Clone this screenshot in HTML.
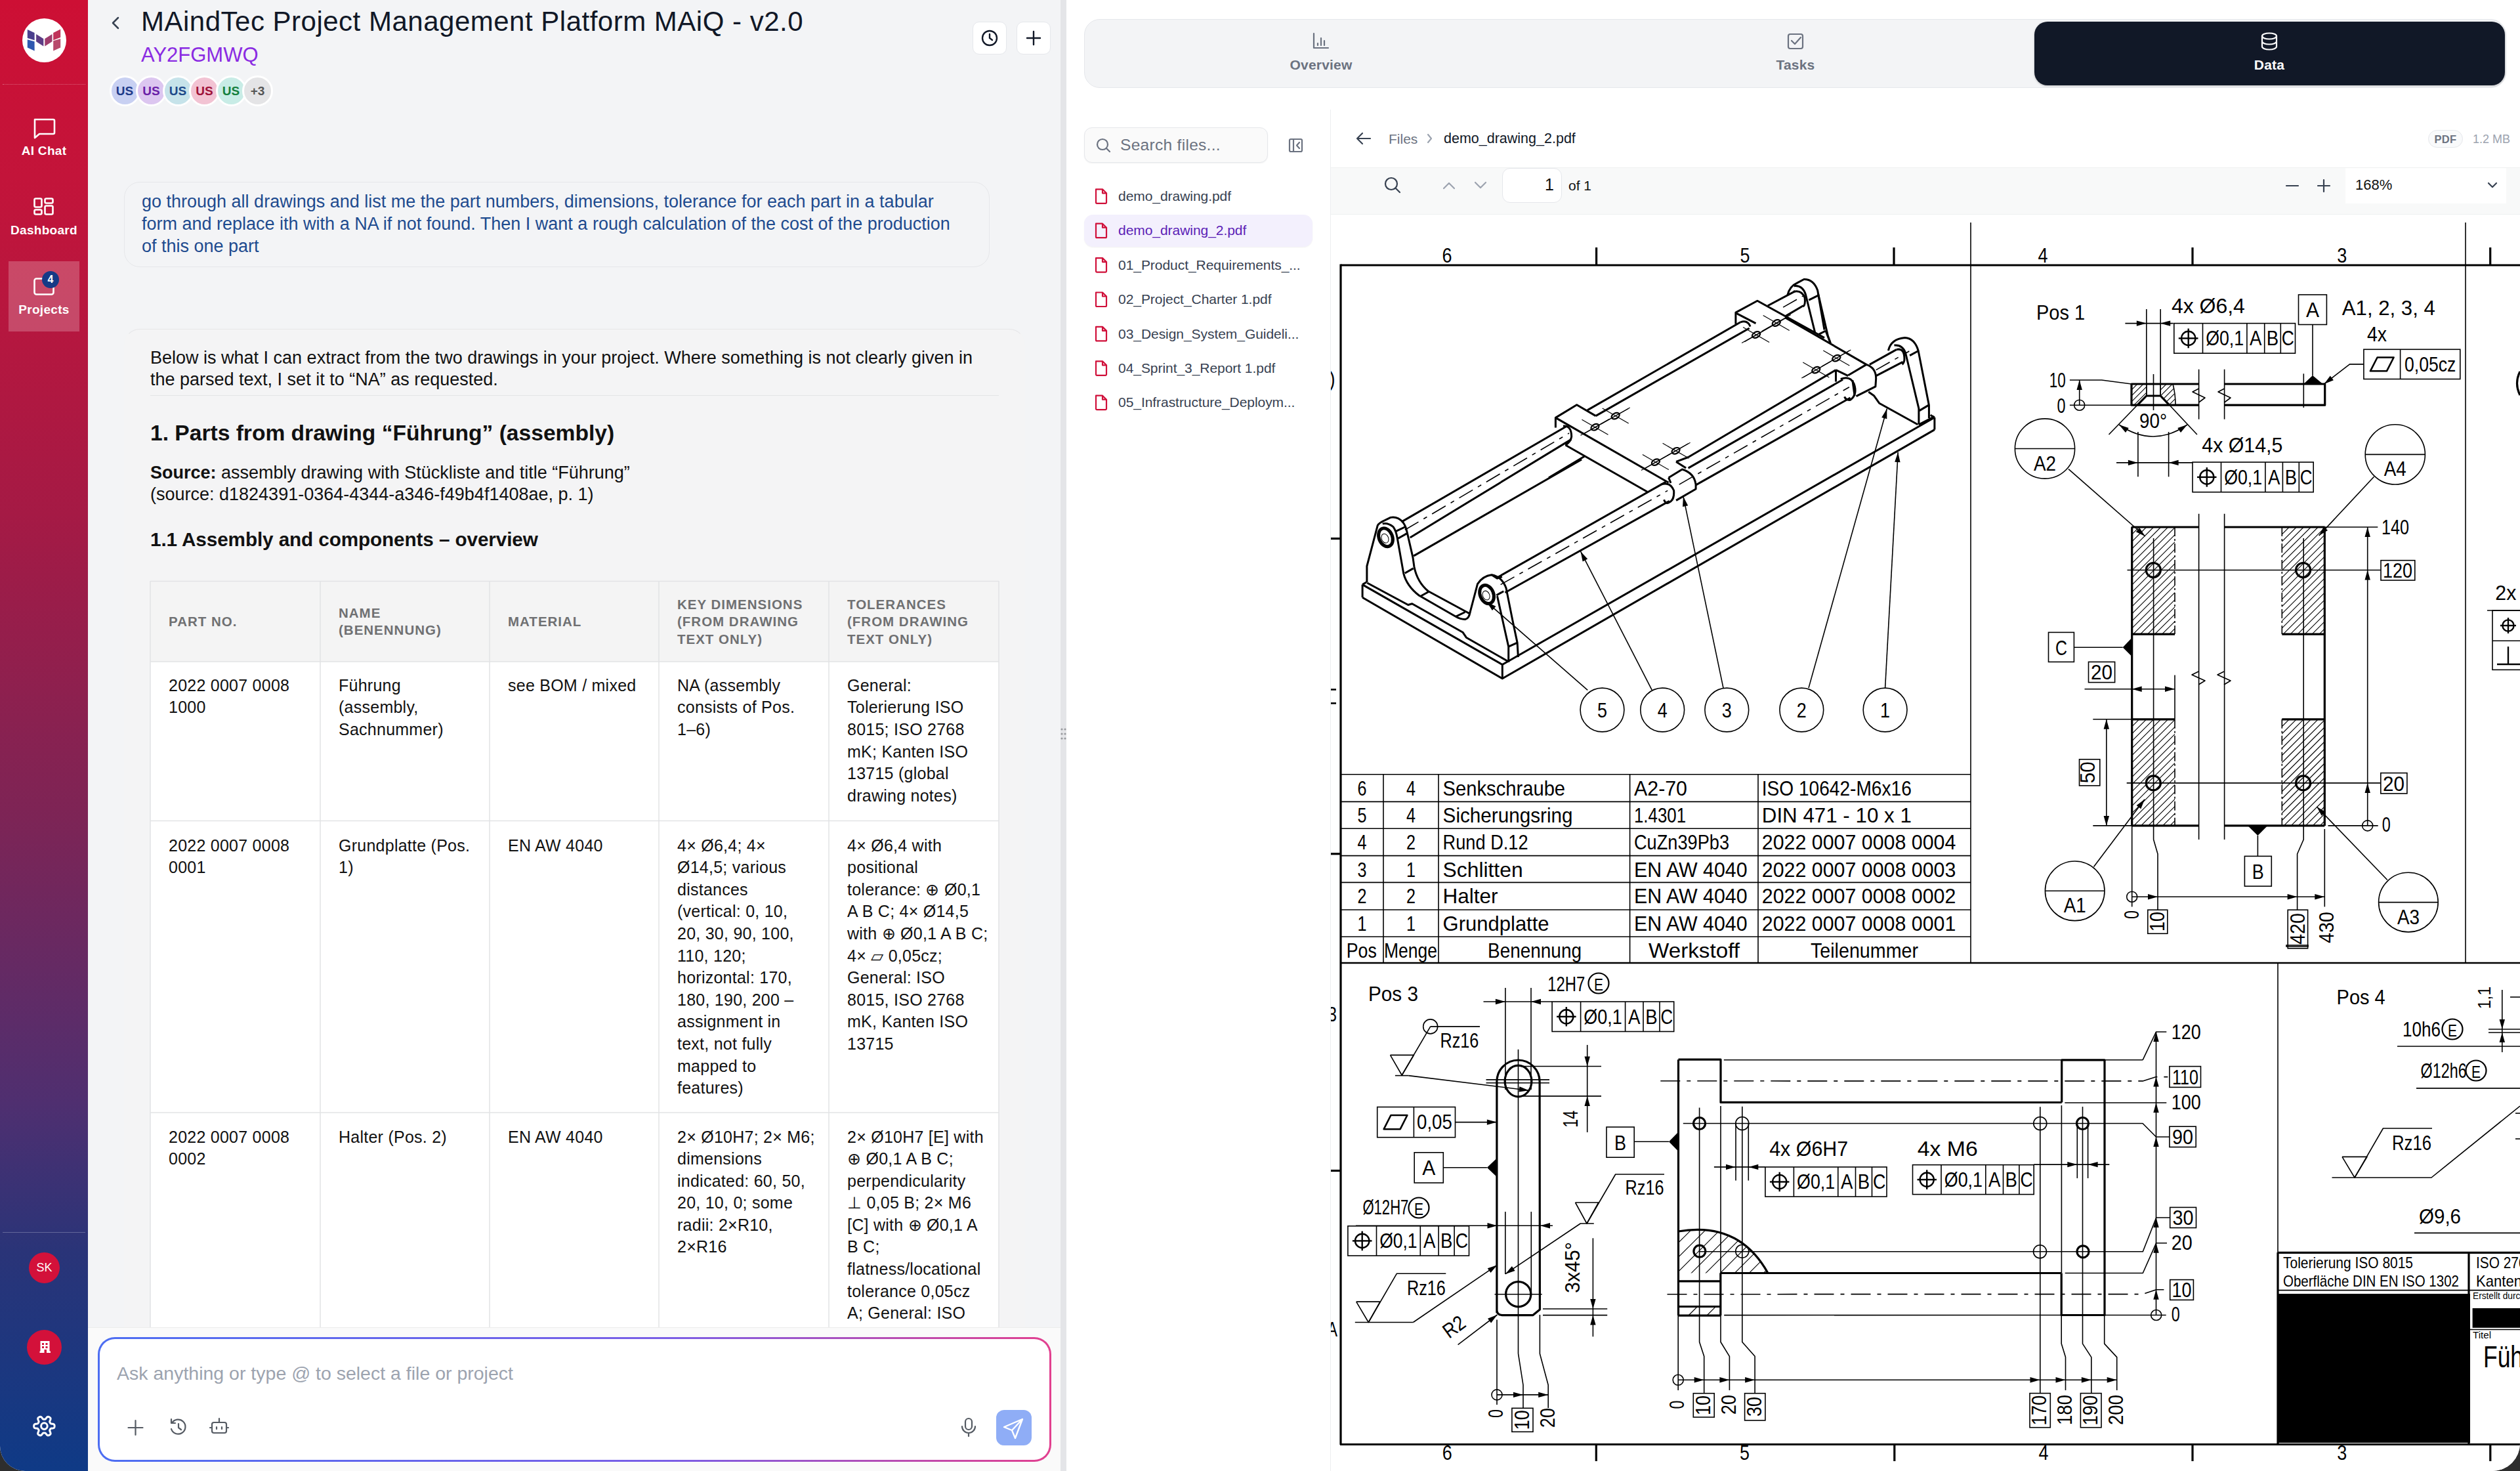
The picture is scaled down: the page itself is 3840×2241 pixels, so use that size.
<!DOCTYPE html><html><head><meta charset="utf-8"><style>
html,body{margin:0;padding:0;width:3840px;height:2241px;overflow:hidden;background:#2e2e2e;font-family:"Liberation Sans",sans-serif;}
#root{position:relative;width:3840px;height:2241px;overflow:hidden;border-radius:0 0 42px 38px;background:#fff;}
svg{position:absolute;left:0;top:0;overflow:visible}
</style></head><body><div id="root">
<div style="position:absolute;left:0px;top:0px;width:134px;height:2241px;background:linear-gradient(180deg,#cd0f34 0%,#c3143a 12%,#a51a45 35%,#7e2455 55%,#4f2f70 75%,#2a3478 85%,#0f3a86 100%);border-bottom-left-radius:22px;"></div>
<div style="position:absolute;left:34px;top:28px;width:67px;height:67px;background:#fff;border-radius:50%;"></div>
<svg width="3840" height="2241" style="pointer-events:none">
<g>
<polygon points="41.8,44.9 52.6,50 52.6,61.2 41.8,58.1" fill="#4b3f8e"/>
<polygon points="41.8,60.2 52.6,63.2 52.6,77.5 41.8,72.4" fill="#2f58b0"/>
<polygon points="55.1,52 66.3,59.1 66.3,70.4 55.1,63.2" fill="#5d3d85"/>
<polygon points="68.3,59.1 79.5,52 79.5,63.2 68.3,70.4" fill="#9e3c6c"/>
<polygon points="81.2,50 92.2,44.5 92.2,57.1 81.2,61.2" fill="#c0335a"/>
<polygon points="81.2,62.2 92.2,59.1 92.2,72.4 81.2,77.5" fill="#b84a6c"/>
</g>
</svg>
<div style="position:absolute;left:4px;top:128px;width:126px;height:1px;border-top:1px dotted rgba(255,255,255,0.35);"></div>
<svg width="3840" height="2241"><g fill="none" stroke="#fff" stroke-width="2.6" stroke-linejoin="round">
<path d="M53,182 h28 a2,2 0 0 1 2,2 v18 a2,2 0 0 1 -2,2 h-21 l-7,6 z"/>
<rect x="52.5" y="302.5" width="11" height="13" rx="2"/><rect x="68.5" y="302.5" width="12" height="7" rx="2"/>
<rect x="52.5" y="319.5" width="11" height="7" rx="2"/><rect x="68.5" y="313.5" width="12" height="13" rx="2"/>
<rect x="52.5" y="424.5" width="29" height="24" rx="3"/>
</g></svg>
<div style="position:absolute;left:7.0px;top:217.5px;font-size:19px;line-height:23.75px;color:#fff;font-weight:700;letter-spacing:0.3px;white-space:nowrap;text-align:center;width:120px;">AI Chat</div>
<div style="position:absolute;left:2.0px;top:338.5px;font-size:19px;line-height:23.75px;color:#fff;font-weight:700;letter-spacing:0.3px;white-space:nowrap;text-align:center;width:130px;">Dashboard</div>
<div style="position:absolute;left:13px;top:398px;width:108px;height:107px;background:rgba(255,255,255,0.22);"></div>
<div style="position:absolute;left:64px;top:413px;width:26px;height:26px;border-radius:50%;background:#163a86;color:#fff;font-size:16px;font-weight:700;text-align:center;line-height:26px">4</div>
<div style="position:absolute;left:2.0px;top:459.5px;font-size:19px;line-height:23.75px;color:#fff;font-weight:700;letter-spacing:0.3px;white-space:nowrap;text-align:center;width:130px;">Projects</div>
<div style="position:absolute;left:4px;top:1877px;width:126px;height:1px;background:rgba(255,255,255,0.25);"></div>
<div style="position:absolute;left:44px;top:1908px;width:47px;height:47px;border-radius:50%;background:#d3113a;color:#fff;font-size:18px;text-align:center;line-height:47px">SK</div>
<div style="position:absolute;left:41px;top:2026px;width:53px;height:53px;border-radius:50%;background:#d3113a;"></div>
<svg width="3840" height="2241"><g fill="#fff">
<path d="M61.5,2043 h14 v15.5 h1.5 v2.5 h-6 v-5 h-3.5 v5 h-7 v-2.5 h1 z"/></g>
<g fill="#d3113a"><rect x="64" y="2046" width="3" height="3"/><rect x="69.5" y="2046" width="3" height="3"/><rect x="64" y="2051" width="3" height="3"/><rect x="69.5" y="2051" width="3" height="3"/></g>
</svg>
<svg width="3840" height="2241"><g fill="none" stroke="#fff" stroke-width="3" stroke-linejoin="round">
<path d="M83.1,2172.6 L83.1,2173.1 L83.0,2173.7 L82.9,2174.2 L82.7,2174.7 L82.3,2175.2 L81.6,2175.6 L80.6,2175.9 L79.3,2176.0 L78.3,2176.1 L77.6,2176.3 L77.2,2176.6 L76.9,2176.8 L76.7,2177.1 L76.5,2177.4 L76.3,2177.8 L76.1,2178.1 L76.0,2178.4 L75.8,2178.7 L75.7,2179.1 L75.7,2179.6 L75.9,2180.3 L76.3,2181.2 L76.8,2182.4 L77.1,2183.4 L77.1,2184.2 L76.9,2184.8 L76.6,2185.2 L76.2,2185.6 L75.7,2185.9 L75.2,2186.2 L74.8,2186.5 L74.3,2186.7 L73.7,2186.8 L73.2,2186.9 L72.6,2186.8 L71.9,2186.4 L71.1,2185.7 L70.4,2184.7 L69.8,2183.8 L69.3,2183.3 L68.9,2183.1 L68.5,2183.0 L68.1,2182.9 L67.8,2182.9 L67.4,2182.9 L67.0,2182.9 L66.7,2182.9 L66.3,2183.0 L65.9,2183.1 L65.5,2183.3 L65.0,2183.8 L64.4,2184.7 L63.7,2185.7 L62.9,2186.4 L62.2,2186.8 L61.6,2186.9 L61.1,2186.8 L60.5,2186.7 L60.0,2186.5 L59.6,2186.2 L59.1,2185.9 L58.6,2185.6 L58.2,2185.2 L57.9,2184.8 L57.7,2184.2 L57.7,2183.4 L58.0,2182.4 L58.5,2181.2 L58.9,2180.3 L59.1,2179.6 L59.1,2179.1 L59.0,2178.7 L58.8,2178.4 L58.7,2178.1 L58.5,2177.8 L58.3,2177.4 L58.1,2177.1 L57.9,2176.8 L57.6,2176.6 L57.2,2176.3 L56.5,2176.1 L55.5,2176.0 L54.2,2175.9 L53.2,2175.6 L52.5,2175.2 L52.1,2174.7 L51.9,2174.2 L51.8,2173.7 L51.7,2173.1 L51.7,2172.6 L51.7,2172.1 L51.8,2171.5 L51.9,2171.0 L52.1,2170.5 L52.5,2170.0 L53.2,2169.6 L54.2,2169.3 L55.5,2169.2 L56.5,2169.1 L57.2,2168.9 L57.6,2168.6 L57.9,2168.4 L58.1,2168.1 L58.3,2167.8 L58.5,2167.4 L58.7,2167.1 L58.8,2166.8 L59.0,2166.5 L59.1,2166.1 L59.1,2165.6 L58.9,2164.9 L58.5,2164.0 L58.0,2162.8 L57.7,2161.8 L57.7,2161.0 L57.9,2160.4 L58.2,2160.0 L58.6,2159.6 L59.1,2159.3 L59.6,2159.0 L60.0,2158.7 L60.5,2158.5 L61.1,2158.4 L61.6,2158.3 L62.2,2158.4 L62.9,2158.8 L63.7,2159.5 L64.4,2160.5 L65.0,2161.4 L65.5,2161.9 L65.9,2162.1 L66.3,2162.2 L66.7,2162.3 L67.0,2162.3 L67.4,2162.3 L67.8,2162.3 L68.1,2162.3 L68.5,2162.2 L68.9,2162.1 L69.3,2161.9 L69.8,2161.4 L70.4,2160.5 L71.1,2159.5 L71.9,2158.8 L72.6,2158.4 L73.2,2158.3 L73.7,2158.4 L74.3,2158.5 L74.8,2158.7 L75.2,2159.0 L75.7,2159.3 L76.2,2159.6 L76.6,2160.0 L76.9,2160.4 L77.1,2161.0 L77.1,2161.8 L76.8,2162.8 L76.3,2164.0 L75.9,2164.9 L75.7,2165.6 L75.7,2166.1 L75.8,2166.5 L76.0,2166.8 L76.1,2167.1 L76.3,2167.4 L76.5,2167.8 L76.7,2168.1 L76.9,2168.4 L77.2,2168.6 L77.6,2168.9 L78.3,2169.1 L79.3,2169.2 L80.6,2169.3 L81.6,2169.6 L82.3,2170.0 L82.7,2170.5 L82.9,2171.0 L83.0,2171.5 L83.1,2172.1 Z"/>
<circle cx="67.4" cy="2172.6" r="4.8"/>
</g></svg>
<div style="position:absolute;left:134px;top:0px;width:1482px;height:2241px;background:#f3f4f6;"></div>
<svg width="3840" height="2241"><path d="M180,27 l-8,8 l8,8" fill="none" stroke="#374151" stroke-width="2.5" stroke-linecap="round" stroke-linejoin="round"/></svg>
<div style="position:absolute;left:215.0px;top:6.7px;font-size:42px;line-height:52.5px;color:#111827;font-weight:400;letter-spacing:0.5px;white-space:nowrap;">MAindTec Project Management Platform MAiQ - v2.0</div>
<div style="position:absolute;left:215.0px;top:64.9px;font-size:31px;line-height:38.75px;color:#8a2be2;font-weight:400;letter-spacing:0px;white-space:nowrap;">AY2FGMWQ</div>
<div style="position:absolute;left:166.5px;top:114.5px;width:41px;height:41px;border:3px solid #fff;border-radius:50%;background:#c8d0f2;color:#1e3a8a;font-size:19px;font-weight:700;text-align:center;line-height:41px">US</div>
<div style="position:absolute;left:207.0px;top:114.5px;width:41px;height:41px;border:3px solid #fff;border-radius:50%;background:#dcc6f0;color:#6b21a8;font-size:19px;font-weight:700;text-align:center;line-height:41px">US</div>
<div style="position:absolute;left:247.5px;top:114.5px;width:41px;height:41px;border:3px solid #fff;border-radius:50%;background:#c6e3ea;color:#1e4a8a;font-size:19px;font-weight:700;text-align:center;line-height:41px">US</div>
<div style="position:absolute;left:288.0px;top:114.5px;width:41px;height:41px;border:3px solid #fff;border-radius:50%;background:#f2c3d3;color:#9f1239;font-size:19px;font-weight:700;text-align:center;line-height:41px">US</div>
<div style="position:absolute;left:328.5px;top:114.5px;width:41px;height:41px;border:3px solid #fff;border-radius:50%;background:#c8ece6;color:#15803d;font-size:19px;font-weight:700;text-align:center;line-height:41px">US</div>
<div style="position:absolute;left:369.0px;top:114.5px;width:41px;height:41px;border:3px solid #fff;border-radius:50%;background:#e4e4e6;color:#555;font-size:19px;font-weight:700;text-align:center;line-height:41px">+3</div>
<div style="position:absolute;left:1482px;top:33px;width:52px;height:50px;background:#fff;border:1px solid #e5e7eb;border-radius:10px;box-sizing:border-box;"></div>
<div style="position:absolute;left:1549px;top:33px;width:52px;height:50px;background:#fff;border:1px solid #e5e7eb;border-radius:10px;box-sizing:border-box;"></div>
<svg width="3840" height="2241"><g fill="none" stroke="#111827" stroke-width="2.4" stroke-linecap="round">
<circle cx="1508" cy="58" r="11"/><path d="M1508,52 v6 l4,3"/>
<path d="M1575,48 v20 M1565,58 h20"/></g></svg>
<div style="position:absolute;left:189px;top:277px;width:1319px;height:130px;background:#f3f4f6;border:1px solid #e6e7ea;border-radius:24px;box-sizing:border-box;"></div>
<div style="position:absolute;left:216.0px;top:291.2px;font-size:27px;line-height:33.8px;color:#1e4b8f;font-weight:400;letter-spacing:0px;white-space:nowrap;">go through all drawings and list me the part numbers, dimensions, tolerance for each part in a tabular<br>form and replace ith with a NA if not found. Then I want a rough calculation of the cost of the production<br>of this one part</div>
<div style="position:absolute;left:189px;top:501px;width:1373px;height:1799px;background:#f4f4f5;border:1px solid transparent;border-top-color:#e6e6e8;border-radius:24px;box-sizing:border-box;"></div>
<div style="position:absolute;left:229.0px;top:528.6px;font-size:27px;line-height:33px;color:#111;font-weight:400;letter-spacing:0px;white-space:nowrap;">Below is what I can extract from the two drawings in your project. Where something is not clearly given in<br>the parsed text, I set it to “NA” as requested.</div>
<div style="position:absolute;left:229px;top:602px;width:1293px;height:1px;background:#e3e4e6;"></div>
<div style="position:absolute;left:229.0px;top:638.9px;font-size:33.6px;line-height:42.0px;color:#111;font-weight:700;letter-spacing:0px;white-space:nowrap;">1. Parts from drawing “Führung” (assembly)</div>
<div style="position:absolute;left:229.0px;top:704.1px;font-size:27px;line-height:33px;color:#111;font-weight:400;letter-spacing:0px;white-space:nowrap;"><b>Source:</b> assembly drawing with Stückliste and title “Führung”<br>(source: d1824391-0364-4344-a346-f49b4f1408ae, p. 1)</div>
<div style="position:absolute;left:229.0px;top:803.1px;font-size:29.7px;line-height:37.125px;color:#111;font-weight:700;letter-spacing:-0.1px;white-space:nowrap;">1.1 Assembly and components – overview</div>
<div style="position:absolute;left:229px;top:885px;width:1293px;height:123px;background:#f4f4f4;"></div>
<div style="position:absolute;left:229px;top:1008px;width:1293px;height:1092px;background:#fff;"></div>
<svg width="3840" height="2241"><g stroke="#e2e3e5" stroke-width="1.5" fill="none">
<path d="M229,885.5 H1522 M229,1008 H1522 M229,1250.5 H1522 M229,1695 H1522"/>
<path d="M229,885 V2100"/>
<path d="M488,885 V2100"/>
<path d="M746,885 V2100"/>
<path d="M1004,885 V2100"/>
<path d="M1263,885 V2100"/>
<path d="M1522,885 V2100"/>
</g></svg>
<div style="position:absolute;left:257.0px;top:934.1px;font-size:20.5px;line-height:26.5px;color:#6f7072;font-weight:700;letter-spacing:1.0px;white-space:nowrap;">PART NO.</div>
<div style="position:absolute;left:516.0px;top:920.9px;font-size:20.5px;line-height:26.5px;color:#6f7072;font-weight:700;letter-spacing:1.0px;white-space:nowrap;">NAME<br>(BENENNUNG)</div>
<div style="position:absolute;left:774.0px;top:934.1px;font-size:20.5px;line-height:26.5px;color:#6f7072;font-weight:700;letter-spacing:1.0px;white-space:nowrap;">MATERIAL</div>
<div style="position:absolute;left:1032.0px;top:907.6px;font-size:20.5px;line-height:26.5px;color:#6f7072;font-weight:700;letter-spacing:1.0px;white-space:nowrap;">KEY DIMENSIONS<br>(FROM DRAWING<br>TEXT ONLY)</div>
<div style="position:absolute;left:1291.0px;top:907.6px;font-size:20.5px;line-height:26.5px;color:#6f7072;font-weight:700;letter-spacing:1.0px;white-space:nowrap;">TOLERANCES<br>(FROM DRAWING<br>TEXT ONLY)</div>
<div style="position:absolute;left:257.0px;top:1027.9px;font-size:25px;line-height:33.6px;color:#111;font-weight:400;letter-spacing:0.25px;white-space:nowrap;">2022 0007 0008<br>1000</div>
<div style="position:absolute;left:516.0px;top:1027.9px;font-size:25px;line-height:33.6px;color:#111;font-weight:400;letter-spacing:0.25px;white-space:nowrap;">Führung<br>(assembly,<br>Sachnummer)</div>
<div style="position:absolute;left:774.0px;top:1027.9px;font-size:25px;line-height:33.6px;color:#111;font-weight:400;letter-spacing:0.25px;white-space:nowrap;">see BOM / mixed</div>
<div style="position:absolute;left:1032.0px;top:1027.9px;font-size:25px;line-height:33.6px;color:#111;font-weight:400;letter-spacing:0.25px;white-space:nowrap;">NA (assembly<br>consists of Pos.<br>1–6)</div>
<div style="position:absolute;left:1291.0px;top:1027.9px;font-size:25px;line-height:33.6px;color:#111;font-weight:400;letter-spacing:0.25px;white-space:nowrap;">General:<br>Tolerierung ISO<br>8015; ISO 2768<br>mK; Kanten ISO<br>13715 (global<br>drawing notes)</div>
<div style="position:absolute;left:257.0px;top:1271.7px;font-size:25px;line-height:33.6px;color:#111;font-weight:400;letter-spacing:0.25px;white-space:nowrap;">2022 0007 0008<br>0001</div>
<div style="position:absolute;left:516.0px;top:1271.7px;font-size:25px;line-height:33.6px;color:#111;font-weight:400;letter-spacing:0.25px;white-space:nowrap;">Grundplatte (Pos.<br>1)</div>
<div style="position:absolute;left:774.0px;top:1271.7px;font-size:25px;line-height:33.6px;color:#111;font-weight:400;letter-spacing:0.25px;white-space:nowrap;">EN AW 4040</div>
<div style="position:absolute;left:1032.0px;top:1271.7px;font-size:25px;line-height:33.6px;color:#111;font-weight:400;letter-spacing:0.25px;white-space:nowrap;">4× Ø6,4; 4×<br>Ø14,5; various<br>distances<br>(vertical: 0, 10,<br>20, 30, 90, 100,<br>110, 120;<br>horizontal: 170,<br>180, 190, 200 –<br>assignment in<br>text, not fully<br>mapped to<br>features)</div>
<div style="position:absolute;left:1291.0px;top:1271.7px;font-size:25px;line-height:33.6px;color:#111;font-weight:400;letter-spacing:0.25px;white-space:nowrap;">4× Ø6,4 with<br>positional<br>tolerance: ⊕ Ø0,1<br>A B C; 4× Ø14,5<br>with ⊕ Ø0,1 A B C;<br>4× ⏥ 0,05cz;<br>General: ISO<br>8015, ISO 2768<br>mK, Kanten ISO<br>13715</div>
<div style="position:absolute;left:257.0px;top:1715.5px;font-size:25px;line-height:33.6px;color:#111;font-weight:400;letter-spacing:0.25px;white-space:nowrap;">2022 0007 0008<br>0002</div>
<div style="position:absolute;left:516.0px;top:1715.5px;font-size:25px;line-height:33.6px;color:#111;font-weight:400;letter-spacing:0.25px;white-space:nowrap;">Halter (Pos. 2)</div>
<div style="position:absolute;left:774.0px;top:1715.5px;font-size:25px;line-height:33.6px;color:#111;font-weight:400;letter-spacing:0.25px;white-space:nowrap;">EN AW 4040</div>
<div style="position:absolute;left:1032.0px;top:1715.5px;font-size:25px;line-height:33.6px;color:#111;font-weight:400;letter-spacing:0.25px;white-space:nowrap;">2× Ø10H7; 2× M6;<br>dimensions<br>indicated: 60, 50,<br>20, 10, 0; some<br>radii: 2×R10,<br>2×R16</div>
<div style="position:absolute;left:1291.0px;top:1715.5px;font-size:25px;line-height:33.6px;color:#111;font-weight:400;letter-spacing:0.25px;white-space:nowrap;">2× Ø10H7 [E] with<br>⊕ Ø0,1 A B C;<br>perpendicularity<br>⊥ 0,05 B; 2× M6<br>[C] with ⊕ Ø0,1 A<br>B C;<br>flatness/locational<br>tolerance 0,05cz<br>A; General: ISO</div>
<div style="position:absolute;left:134px;top:2022px;width:1482px;height:219px;background:#fafafa;border-top:1px solid #ececec;box-sizing:border-box;"></div>
<div style="position:absolute;left:149px;top:2037px;width:1453px;height:190px;border-radius:26px;background:linear-gradient(90deg,#4d6ef2,#7a5ee6 60%,#e2408f);"></div>
<div style="position:absolute;left:152px;top:2040px;width:1447px;height:184px;border-radius:23px;background:#fff;"></div>
<div style="position:absolute;left:178.0px;top:2074.8px;font-size:28.5px;line-height:35.625px;color:#9ca3af;font-weight:400;letter-spacing:0px;white-space:nowrap;">Ask anything or type @ to select a file or project</div>
<svg width="3840" height="2241"><g fill="none" stroke="#555b63" stroke-width="2.2" stroke-linecap="round" stroke-linejoin="round">
<path d="M206.5,2164 v22 M195.5,2175 h22"/>
<path d="M262,2168 a11,11 0 1 1 -1,9"/><path d="M261,2162 v6 h6"/><path d="M272,2169 v6 l4,3"/>
<rect x="323" y="2167" width="22" height="16" rx="3"/><path d="M334,2161 v6 M320,2175 h3 M345,2175 h3 M330,2174 v3 M338,2174 v3"/>
<rect x="1471" y="2161" width="10" height="17" rx="5"/><path d="M1466,2173 a10,10 0 0 0 20,0 M1476,2183 v5"/>
</g></svg>
<div style="position:absolute;left:1518px;top:2148px;width:54px;height:54px;background:#8fadf6;border-radius:12px;"></div>
<svg width="3840" height="2241"><g fill="none" stroke="#fff" stroke-width="2.4" stroke-linejoin="round" stroke-linecap="round">
<path d="M1558,2162 l-28,12 l12,5 l5,12 z M1542,2179 l16,-17"/></g></svg>
<div style="position:absolute;left:1616px;top:0px;width:9px;height:2241px;background:#e4e5e8;"></div>
<svg width="3840" height="2241"><g fill="#9a9ca0"><circle cx="1618" cy="1111" r="1.6"/><circle cx="1623" cy="1111" r="1.6"/><circle cx="1618" cy="1118" r="1.6"/><circle cx="1623" cy="1118" r="1.6"/><circle cx="1618" cy="1125" r="1.6"/><circle cx="1623" cy="1125" r="1.6"/></g></svg>
<div style="position:absolute;left:1625px;top:0px;width:2215px;height:2241px;background:#fff;"></div>
<div style="position:absolute;left:1652px;top:29px;width:2167px;height:105px;background:#f3f4f6;border:1px solid #e5e7eb;border-radius:24px;box-sizing:border-box;"></div>
<div style="position:absolute;left:3100px;top:33px;width:717px;height:97px;background:#111827;border-radius:20px;box-shadow:0 1px 3px rgba(0,0,0,0.25);"></div>
<svg width="3840" height="2241"><g fill="none" stroke-width="2.2" stroke-linecap="round" stroke-linejoin="round">
<g stroke="#6b7280"><path d="M2002,51 v22 h22 M2008,66 v3 M2013,58 v11 M2018,62 v7"/>
<rect x="2725" y="52" width="22" height="22" rx="3"/><path d="M2730,62 l5,5 l9,-10"/></g>
<g stroke="#fff"><ellipse cx="3458" cy="55" rx="11" ry="4.5"/><path d="M3447,55 v16 a11,4.5 0 0 0 22,0 v-16 M3447,63 a11,4.5 0 0 0 22,0"/></g>
</g></svg>
<div style="position:absolute;left:1913.0px;top:85.6px;font-size:21px;line-height:26.25px;color:#6b7280;font-weight:700;letter-spacing:0.2px;white-space:nowrap;text-align:center;width:200px;">Overview</div>
<div style="position:absolute;left:2636.0px;top:85.6px;font-size:21px;line-height:26.25px;color:#6b7280;font-weight:700;letter-spacing:0.2px;white-space:nowrap;text-align:center;width:200px;">Tasks</div>
<div style="position:absolute;left:3358.0px;top:86.1px;font-size:21px;line-height:26.25px;color:#fff;font-weight:700;letter-spacing:0.2px;white-space:nowrap;text-align:center;width:200px;">Data</div>
<div style="position:absolute;left:1652px;top:194px;width:280px;height:54px;background:#fafafa;border:1px solid #e5e7eb;border-radius:12px;box-sizing:border-box;box-shadow:0 1px 2px rgba(0,0,0,0.05)"></div>
<svg width="3840" height="2241"><g fill="none" stroke="#6b7280" stroke-width="2.2" stroke-linecap="round" stroke-linejoin="round">
<circle cx="1680" cy="220" r="8"/><path d="M1686,226 l5,5"/>
<rect x="1965" y="212" width="19" height="19" rx="2"/><path d="M1971,212 v19 M1980,217 l-4,4.5 l4,4.5"/>
</g></svg>
<div style="position:absolute;left:1707.0px;top:205.7px;font-size:24.5px;line-height:30.625px;color:#6b7280;font-weight:400;letter-spacing:0.3px;white-space:nowrap;">Search files...</div>
<div style="position:absolute;left:2027px;top:167px;width:1px;height:2074px;background:#eceef0;"></div>
<div style="position:absolute;left:1652px;top:327px;width:348px;height:49px;background:#f3f0fd;border-radius:14px;box-shadow:0 1px 2px rgba(0,0,0,0.06)"></div>
<svg width="3840" height="2241"><g fill="none" stroke="#d0103a" stroke-width="2.2" stroke-linejoin="round">
<path d="M1670,288.3 h10 l6,6 v14 a1.5,1.5 0 0 1 -1.5,1.5 h-13 a1.5,1.5 0 0 1 -1.5,-1.5 z M1680,288.3 v6 h6"/>
<path d="M1670,340.7 h10 l6,6 v14 a1.5,1.5 0 0 1 -1.5,1.5 h-13 a1.5,1.5 0 0 1 -1.5,-1.5 z M1680,340.7 v6 h6"/>
<path d="M1670,393.1 h10 l6,6 v14 a1.5,1.5 0 0 1 -1.5,1.5 h-13 a1.5,1.5 0 0 1 -1.5,-1.5 z M1680,393.1 v6 h6"/>
<path d="M1670,445.5 h10 l6,6 v14 a1.5,1.5 0 0 1 -1.5,1.5 h-13 a1.5,1.5 0 0 1 -1.5,-1.5 z M1680,445.5 v6 h6"/>
<path d="M1670,497.9 h10 l6,6 v14 a1.5,1.5 0 0 1 -1.5,1.5 h-13 a1.5,1.5 0 0 1 -1.5,-1.5 z M1680,497.9 v6 h6"/>
<path d="M1670,550.3 h10 l6,6 v14 a1.5,1.5 0 0 1 -1.5,1.5 h-13 a1.5,1.5 0 0 1 -1.5,-1.5 z M1680,550.3 v6 h6"/>
<path d="M1670,602.7 h10 l6,6 v14 a1.5,1.5 0 0 1 -1.5,1.5 h-13 a1.5,1.5 0 0 1 -1.5,-1.5 z M1680,602.7 v6 h6"/>
</g></svg>
<div style="position:absolute;left:1704.0px;top:285.9px;font-size:21px;line-height:26.25px;color:#374151;font-weight:400;letter-spacing:-0.05px;white-space:nowrap;">demo_drawing.pdf</div>
<div style="position:absolute;left:1704.0px;top:338.3px;font-size:21px;line-height:26.25px;color:#5b21b6;font-weight:400;letter-spacing:-0.05px;white-space:nowrap;">demo_drawing_2.pdf</div>
<div style="position:absolute;left:1704.0px;top:390.7px;font-size:21px;line-height:26.25px;color:#374151;font-weight:400;letter-spacing:-0.05px;white-space:nowrap;">01_Product_Requirements_...</div>
<div style="position:absolute;left:1704.0px;top:443.1px;font-size:21px;line-height:26.25px;color:#374151;font-weight:400;letter-spacing:-0.05px;white-space:nowrap;">02_Project_Charter 1.pdf</div>
<div style="position:absolute;left:1704.0px;top:495.5px;font-size:21px;line-height:26.25px;color:#374151;font-weight:400;letter-spacing:-0.05px;white-space:nowrap;">03_Design_System_Guideli...</div>
<div style="position:absolute;left:1704.0px;top:547.9px;font-size:21px;line-height:26.25px;color:#374151;font-weight:400;letter-spacing:-0.05px;white-space:nowrap;">04_Sprint_3_Report 1.pdf</div>
<div style="position:absolute;left:1704.0px;top:600.3px;font-size:21px;line-height:26.25px;color:#374151;font-weight:400;letter-spacing:-0.05px;white-space:nowrap;">05_Infrastructure_Deploym...</div>
<svg width="3840" height="2241"><g fill="none" stroke="#374151" stroke-width="2.2" stroke-linecap="round" stroke-linejoin="round">
<path d="M2088,211 h-20 M2076,203 l-8,8 l8,8"/>
<path d="M2176,205 l5,6 l-5,6" stroke="#9ca3af"/>
</g></svg>
<div style="position:absolute;left:2116.0px;top:198.6px;font-size:21px;line-height:26.25px;color:#6b7280;font-weight:400;letter-spacing:0px;white-space:nowrap;">Files</div>
<div style="position:absolute;left:2200.0px;top:198.1px;font-size:21.5px;line-height:26.875px;color:#111827;font-weight:400;letter-spacing:0px;white-space:nowrap;">demo_drawing_2.pdf</div>
<div style="position:absolute;left:3700px;top:198px;width:53px;height:27px;background:#f9fafb;border:1px solid #e5e7eb;border-radius:14px;box-sizing:border-box;"></div>
<div style="position:absolute;left:3696.5px;top:202.0px;font-size:16.5px;line-height:20.625px;color:#6b7280;font-weight:700;letter-spacing:0.3px;white-space:nowrap;text-align:center;width:60px;">PDF</div>
<div style="position:absolute;left:3768.0px;top:200.5px;font-size:18px;line-height:22.5px;color:#9ca3af;font-weight:400;letter-spacing:0px;white-space:nowrap;">1.2 MB</div>
<div style="position:absolute;left:2028px;top:255px;width:1812px;height:72px;background:#f8f9f9;border-top:1px solid #eef0f0;border-bottom:1px solid #eef0f0;box-sizing:border-box;"></div>
<div style="position:absolute;left:2289px;top:256px;width:91px;height:53px;background:#fff;border:1px solid #e5e7eb;border-radius:12px;box-sizing:border-box;"></div>
<div style="position:absolute;left:2328.0px;top:266.2px;font-size:25px;line-height:31.25px;color:#111;font-weight:400;letter-spacing:0px;white-space:nowrap;text-align:right;width:40px;">1</div>
<div style="position:absolute;left:2390.0px;top:269.6px;font-size:21px;line-height:26.25px;color:#111;font-weight:400;letter-spacing:0px;white-space:nowrap;">of 1</div>
<div style="position:absolute;left:3574px;top:256px;width:245px;height:54px;background:#fff;"></div>
<div style="position:absolute;left:3589.0px;top:267.6px;font-size:22px;line-height:27.5px;color:#111;font-weight:400;letter-spacing:0px;white-space:nowrap;">168%</div>
<svg width="3840" height="2241"><g fill="none" stroke="#374151" stroke-width="2.2" stroke-linecap="round" stroke-linejoin="round">
<circle cx="2120" cy="280" r="9"/><path d="M2127,287 l6,6"/>
<path d="M2200,287 l8,-8 l8,8 M2248,278 l8,8 l8,-8" stroke="#9ca3af"/>
<path d="M3484,283 h18 M3532,283 h18 M3541,274 v18"/>
<path d="M3792,279 l6,6 l6,-6"/>
</g></svg>
<svg width="3840" height="2241" style="position:absolute;left:0;top:0"><defs><clipPath id="pdfclip"><rect x="2028" y="327" width="1812" height="1914"/></clipPath></defs><g clip-path="url(#pdfclip)" font-family="Liberation Sans" fill="#000"><path d="M2043.0,404.0 L3840.0,404.0" stroke="#000" stroke-width="3.2" fill="none" stroke-linejoin="round" />
<path d="M2043.0,402.5 L2043.0,2201.0" stroke="#000" stroke-width="3.2" fill="none" stroke-linejoin="round" />
<path d="M2042.0,2200.5 L3840.0,2200.5" stroke="#000" stroke-width="3.2" fill="none" stroke-linejoin="round" />
<path d="M2432.6,377.0 L2432.6,404.0" stroke="#000" stroke-width="3.2" fill="none" stroke-linejoin="round" />
<path d="M2886.0,377.0 L2886.0,404.0" stroke="#000" stroke-width="3.2" fill="none" stroke-linejoin="round" />
<path d="M3341.0,377.0 L3341.0,404.0" stroke="#000" stroke-width="3.2" fill="none" stroke-linejoin="round" />
<path d="M3794.7,377.0 L3794.7,404.0" stroke="#000" stroke-width="3.2" fill="none" stroke-linejoin="round" />
<text x="2205.0" y="400.0" font-size="32" text-anchor="middle" textLength="15.0" lengthAdjust="spacingAndGlyphs">6</text>
<text x="2659.0" y="400.0" font-size="32" text-anchor="middle" textLength="15.0" lengthAdjust="spacingAndGlyphs">5</text>
<text x="3113.0" y="400.0" font-size="32" text-anchor="middle" textLength="15.0" lengthAdjust="spacingAndGlyphs">4</text>
<text x="3568.8" y="400.0" font-size="32" text-anchor="middle" textLength="15.0" lengthAdjust="spacingAndGlyphs">3</text>
<path d="M2432.3,2200.0 L2432.3,2226.0" stroke="#000" stroke-width="3.2" fill="none" stroke-linejoin="round" />
<path d="M2886.8,2200.0 L2886.8,2226.0" stroke="#000" stroke-width="3.2" fill="none" stroke-linejoin="round" />
<path d="M3341.0,2200.0 L3341.0,2226.0" stroke="#000" stroke-width="3.2" fill="none" stroke-linejoin="round" />
<path d="M3794.8,2200.0 L3794.8,2226.0" stroke="#000" stroke-width="3.2" fill="none" stroke-linejoin="round" />
<text x="2205.2" y="2224.4" font-size="32" text-anchor="middle" textLength="15.0" lengthAdjust="spacingAndGlyphs">6</text>
<text x="2658.6" y="2224.4" font-size="32" text-anchor="middle" textLength="15.0" lengthAdjust="spacingAndGlyphs">5</text>
<text x="3114.0" y="2224.4" font-size="32" text-anchor="middle" textLength="15.0" lengthAdjust="spacingAndGlyphs">4</text>
<text x="3568.8" y="2224.4" font-size="32" text-anchor="middle" textLength="15.0" lengthAdjust="spacingAndGlyphs">3</text>
<path d="M2028.0,820.5 L2043.0,820.5" stroke="#000" stroke-width="3.2" fill="none" stroke-linejoin="round" />
<path d="M2028.0,1300.8 L2043.0,1300.8" stroke="#000" stroke-width="3.2" fill="none" stroke-linejoin="round" />
<path d="M2028.0,1783.5 L2043.0,1783.5" stroke="#000" stroke-width="3.2" fill="none" stroke-linejoin="round" />
<text x="2030.0" y="588.0" font-size="31.5" text-anchor="middle" textLength="9.0" lengthAdjust="spacingAndGlyphs">)</text>
<text x="2030.0" y="1556.0" font-size="31.5" text-anchor="middle" textLength="14.0" lengthAdjust="spacingAndGlyphs">3</text>
<text x="2030.0" y="2036.0" font-size="31.5" text-anchor="middle" textLength="16.0" lengthAdjust="spacingAndGlyphs">A</text>
<path d="M3003.0,339.0 L3003.0,1466.0" stroke="#000" stroke-width="1.6" fill="none" stroke-linejoin="round" />
<path d="M3757.0,339.0 L3757.0,1466.0" stroke="#000" stroke-width="1.6" fill="none" stroke-linejoin="round" />
<path d="M2043.0,1466.5 L3840.0,1466.5" stroke="#000" stroke-width="1.6" fill="none" stroke-linejoin="round" />
<path d="M3471.0,1466.0 L3471.0,2200.0" stroke="#000" stroke-width="1.6" fill="none" stroke-linejoin="round" />
<path d="M2043.0,1179.8 L3003.0,1179.8" stroke="#000" stroke-width="1.6" fill="none" stroke-linejoin="round" />
<path d="M2043.0,1221.4 L3003.0,1221.4" stroke="#000" stroke-width="1.6" fill="none" stroke-linejoin="round" />
<path d="M2043.0,1262.3 L3003.0,1262.3" stroke="#000" stroke-width="1.6" fill="none" stroke-linejoin="round" />
<path d="M2043.0,1303.6 L3003.0,1303.6" stroke="#000" stroke-width="1.6" fill="none" stroke-linejoin="round" />
<path d="M2043.0,1344.4 L3003.0,1344.4" stroke="#000" stroke-width="1.6" fill="none" stroke-linejoin="round" />
<path d="M2043.0,1386.0 L3003.0,1386.0" stroke="#000" stroke-width="1.6" fill="none" stroke-linejoin="round" />
<path d="M2043.0,1427.0 L3003.0,1427.0" stroke="#000" stroke-width="1.6" fill="none" stroke-linejoin="round" />
<path d="M2043.0,1467.5 L3003.0,1467.5" stroke="#000" stroke-width="1.6" fill="none" stroke-linejoin="round" />
<path d="M2108.0,1179.8 L2108.0,1467.5" stroke="#000" stroke-width="1.6" fill="none" stroke-linejoin="round" />
<path d="M2192.0,1179.8 L2192.0,1467.5" stroke="#000" stroke-width="1.6" fill="none" stroke-linejoin="round" />
<path d="M2483.6,1179.8 L2483.6,1467.5" stroke="#000" stroke-width="1.6" fill="none" stroke-linejoin="round" />
<path d="M2679.0,1179.8 L2679.0,1467.5" stroke="#000" stroke-width="1.6" fill="none" stroke-linejoin="round" />
<text x="2075.6" y="1211.8" font-size="31.5" text-anchor="middle" textLength="14.0" lengthAdjust="spacingAndGlyphs">6</text>
<text x="2150.0" y="1211.8" font-size="31.5" text-anchor="middle" textLength="14.0" lengthAdjust="spacingAndGlyphs">4</text>
<text x="2198.6" y="1211.8" font-size="31.5" text-anchor="start" textLength="186.5" lengthAdjust="spacingAndGlyphs">Senkschraube</text>
<text x="2490.0" y="1211.8" font-size="31.5" text-anchor="start" textLength="81.0" lengthAdjust="spacingAndGlyphs">A2-70</text>
<text x="2684.8" y="1211.8" font-size="31.5" text-anchor="start" textLength="228.0" lengthAdjust="spacingAndGlyphs">ISO 10642-M6x16</text>
<text x="2075.6" y="1253.4" font-size="31.5" text-anchor="middle" textLength="14.0" lengthAdjust="spacingAndGlyphs">5</text>
<text x="2150.0" y="1253.4" font-size="31.5" text-anchor="middle" textLength="14.0" lengthAdjust="spacingAndGlyphs">4</text>
<text x="2198.6" y="1253.4" font-size="31.5" text-anchor="start" textLength="198.0" lengthAdjust="spacingAndGlyphs">Sicherungsring</text>
<text x="2490.0" y="1253.4" font-size="31.5" text-anchor="start" textLength="79.0" lengthAdjust="spacingAndGlyphs">1.4301</text>
<text x="2684.8" y="1253.4" font-size="31.5" text-anchor="start" textLength="228.0" lengthAdjust="spacingAndGlyphs">DIN 471 - 10 x 1</text>
<text x="2075.6" y="1294.3" font-size="31.5" text-anchor="middle" textLength="14.0" lengthAdjust="spacingAndGlyphs">4</text>
<text x="2150.0" y="1294.3" font-size="31.5" text-anchor="middle" textLength="14.0" lengthAdjust="spacingAndGlyphs">2</text>
<text x="2198.6" y="1294.3" font-size="31.5" text-anchor="start" textLength="130.0" lengthAdjust="spacingAndGlyphs">Rund D.12</text>
<text x="2490.0" y="1294.3" font-size="31.5" text-anchor="start" textLength="145.0" lengthAdjust="spacingAndGlyphs">CuZn39Pb3</text>
<text x="2684.8" y="1294.3" font-size="31.5" text-anchor="start" textLength="295.6" lengthAdjust="spacingAndGlyphs">2022 0007 0008 0004</text>
<text x="2075.6" y="1335.6" font-size="31.5" text-anchor="middle" textLength="14.0" lengthAdjust="spacingAndGlyphs">3</text>
<text x="2150.0" y="1335.6" font-size="31.5" text-anchor="middle" textLength="14.0" lengthAdjust="spacingAndGlyphs">1</text>
<text x="2198.6" y="1335.6" font-size="31.5" text-anchor="start" textLength="122.0" lengthAdjust="spacingAndGlyphs">Schlitten</text>
<text x="2490.0" y="1335.6" font-size="31.5" text-anchor="start" textLength="172.6" lengthAdjust="spacingAndGlyphs">EN AW 4040</text>
<text x="2684.8" y="1335.6" font-size="31.5" text-anchor="start" textLength="295.6" lengthAdjust="spacingAndGlyphs">2022 0007 0008 0003</text>
<text x="2075.6" y="1376.4" font-size="31.5" text-anchor="middle" textLength="14.0" lengthAdjust="spacingAndGlyphs">2</text>
<text x="2150.0" y="1376.4" font-size="31.5" text-anchor="middle" textLength="14.0" lengthAdjust="spacingAndGlyphs">2</text>
<text x="2198.6" y="1376.4" font-size="31.5" text-anchor="start" textLength="84.0" lengthAdjust="spacingAndGlyphs">Halter</text>
<text x="2490.0" y="1376.4" font-size="31.5" text-anchor="start" textLength="172.6" lengthAdjust="spacingAndGlyphs">EN AW 4040</text>
<text x="2684.8" y="1376.4" font-size="31.5" text-anchor="start" textLength="295.6" lengthAdjust="spacingAndGlyphs">2022 0007 0008 0002</text>
<text x="2075.6" y="1418.0" font-size="31.5" text-anchor="middle" textLength="14.0" lengthAdjust="spacingAndGlyphs">1</text>
<text x="2150.0" y="1418.0" font-size="31.5" text-anchor="middle" textLength="14.0" lengthAdjust="spacingAndGlyphs">1</text>
<text x="2198.6" y="1418.0" font-size="31.5" text-anchor="start" textLength="162.0" lengthAdjust="spacingAndGlyphs">Grundplatte</text>
<text x="2490.0" y="1418.0" font-size="31.5" text-anchor="start" textLength="172.6" lengthAdjust="spacingAndGlyphs">EN AW 4040</text>
<text x="2684.8" y="1418.0" font-size="31.5" text-anchor="start" textLength="295.6" lengthAdjust="spacingAndGlyphs">2022 0007 0008 0001</text>
<text x="2051.8" y="1458.7" font-size="31.5" text-anchor="start" textLength="46.0" lengthAdjust="spacingAndGlyphs">Pos</text>
<text x="2109.0" y="1458.7" font-size="31.5" text-anchor="start" textLength="81.0" lengthAdjust="spacingAndGlyphs">Menge</text>
<text x="2267.0" y="1458.7" font-size="31.5" text-anchor="start" textLength="143.0" lengthAdjust="spacingAndGlyphs">Benennung</text>
<text x="2512.0" y="1458.7" font-size="31.5" text-anchor="start" textLength="139.0" lengthAdjust="spacingAndGlyphs">Werkstoff</text>
<text x="2759.0" y="1458.7" font-size="31.5" text-anchor="start" textLength="164.0" lengthAdjust="spacingAndGlyphs">Teilenummer</text>
<path d="M3003.0,1467.5 L3840.0,1467.5" stroke="#000" stroke-width="1.6" fill="none" stroke-linejoin="round" />
<path d="M2028.0,1050.5 L2036.0,1050.5" stroke="#000" stroke-width="2.6" fill="none" stroke-linejoin="round" />
<path d="M2028.0,1071.4 L2036.0,1071.4" stroke="#000" stroke-width="2.6" fill="none" stroke-linejoin="round" />
<text x="3103.0" y="486.7" font-size="31.5" text-anchor="start" textLength="74.0" lengthAdjust="spacingAndGlyphs">Pos 1</text>
<text x="3308.9" y="477.0" font-size="31.5" text-anchor="start" textLength="112.0" lengthAdjust="spacingAndGlyphs">4x Ø6,4</text>
<text x="3568.8" y="480.0" font-size="31.5" text-anchor="start" textLength="142.0" lengthAdjust="spacingAndGlyphs">A1, 2, 3, 4</text>
<text x="3607.0" y="519.8" font-size="31.5" text-anchor="start" textLength="30.0" lengthAdjust="spacingAndGlyphs">4x</text>
<path d="M3350.6,585.0 L3248.0,585.0 L3248.0,617.2 L3350.6,617.2" stroke="#000" stroke-width="3.2" fill="none" stroke-linejoin="round" />
<path d="M3389.6,585.0 L3542.7,585.0 L3542.7,617.2 L3389.6,617.2" stroke="#000" stroke-width="3.2" fill="none" stroke-linejoin="round" />
<path d="M3350.6,562.7 L3350.6,638.7" stroke="#000" stroke-width="1.6" fill="none" stroke-linejoin="round" />
<path d="M3389.6,562.7 L3389.6,638.7" stroke="#000" stroke-width="1.6" fill="none" stroke-linejoin="round" />
<path d="M3350.6,592.0 L3341.0,597.0 L3360.0,606.0 L3350.6,613.0" stroke="#000" stroke-width="1.6" fill="none" stroke-linejoin="round" />
<path d="M3389.6,592.0 L3380.0,597.0 L3399.0,606.0 L3389.6,613.0" stroke="#000" stroke-width="1.6" fill="none" stroke-linejoin="round" />
<clipPath id="hp1"><path d="M3248.0,585.0 L3270.8,585.0 L3270.8,603.0 L3257.0,617.2 L3248.0,617.2 Z"/></clipPath>
<path d="M3215.8,617.2 L3248.0,585.0 M3224.8,617.2 L3257.0,585.0 M3233.8,617.2 L3266.0,585.0 M3242.8,617.2 L3275.0,585.0 M3251.8,617.2 L3284.0,585.0 M3260.8,617.2 L3293.0,585.0 M3269.8,617.2 L3302.0,585.0" stroke="#000" stroke-width="1.1" clip-path="url(#hp1)"/>
<clipPath id="hp2"><path d="M3292.2,585.0 L3311.0,585.0 L3315.0,617.2 L3305.8,617.2 L3292.2,603.0 Z"/></clipPath>
<path d="M3260.0,617.2 L3292.2,585.0 M3269.0,617.2 L3301.2,585.0 M3278.0,617.2 L3310.2,585.0 M3287.0,617.2 L3319.2,585.0 M3296.0,617.2 L3328.2,585.0 M3305.0,617.2 L3337.2,585.0 M3314.0,617.2 L3346.2,585.0" stroke="#000" stroke-width="1.1" clip-path="url(#hp2)"/>
<path d="M3257.0,617.2 L3270.8,603.0 L3292.2,603.0 L3305.8,617.2" stroke="#000" stroke-width="3.2" fill="none" stroke-linejoin="round" />
<path d="M3270.8,585.0 L3270.8,603.0" stroke="#000" stroke-width="1.6" fill="none" stroke-linejoin="round" />
<path d="M3292.2,585.0 L3292.2,603.0" stroke="#000" stroke-width="1.6" fill="none" stroke-linejoin="round" />
<path d="M3311,585 Q3315,600 3315,617" stroke="#000" stroke-width="1.6" fill="none" stroke-linejoin="round"/>
<path d="M3281.5,570.0 L3281.5,625.0" stroke="#000" stroke-width="1.6" fill="none" stroke-linejoin="round" />
<path d="M3270.8,471.0 L3270.8,603.0" stroke="#000" stroke-width="1.6" fill="none" stroke-linejoin="round" />
<path d="M3292.2,471.0 L3292.2,603.0" stroke="#000" stroke-width="1.6" fill="none" stroke-linejoin="round" />
<path d="M3238.4,492.6 L3311.7,492.6" stroke="#000" stroke-width="1.6" fill="none" stroke-linejoin="round" />
<path d="M3270.8,492.6 L3255.8,496.8 L3255.8,488.4 Z" fill="#000"/>
<path d="M3292.2,492.6 L3307.2,488.4 L3307.2,496.8 Z" fill="#000"/>
<rect x="3312.8" y="492.6" width="184.7" height="45.6" stroke="#000" stroke-width="1.6" fill="none"/>
<path d="M3356.5,492.6 L3356.5,538.2" stroke="#000" stroke-width="1.6" fill="none" stroke-linejoin="round" />
<path d="M3423.9,492.6 L3423.9,538.2" stroke="#000" stroke-width="1.6" fill="none" stroke-linejoin="round" />
<path d="M3450.7,492.6 L3450.7,538.2" stroke="#000" stroke-width="1.6" fill="none" stroke-linejoin="round" />
<path d="M3475.3,492.6 L3475.3,538.2" stroke="#000" stroke-width="1.6" fill="none" stroke-linejoin="round" />
<circle cx="3334.7" cy="515.4" r="10.7" stroke="#000" stroke-width="2.4" fill="none"/>
<path d="M3319.8,515.4 L3349.5,515.4" stroke="#000" stroke-width="2.4" fill="none" stroke-linejoin="round" />
<path d="M3334.7,500.5 L3334.7,530.3" stroke="#000" stroke-width="2.4" fill="none" stroke-linejoin="round" />
<text x="3390.2" y="526.2" font-size="31.5" text-anchor="middle" textLength="58.0" lengthAdjust="spacingAndGlyphs">Ø0,1</text>
<text x="3437.3" y="526.2" font-size="31.5" text-anchor="middle" textLength="18.4" lengthAdjust="spacingAndGlyphs">A</text>
<text x="3463.0" y="526.2" font-size="31.5" text-anchor="middle" textLength="18.4" lengthAdjust="spacingAndGlyphs">B</text>
<text x="3486.4" y="526.2" font-size="31.5" text-anchor="middle" textLength="19.1" lengthAdjust="spacingAndGlyphs">C</text>
<rect x="3502.5" y="449.0" width="42.9" height="45.5" stroke="#000" stroke-width="1.6" fill="none"/>
<text x="3524.0" y="483.0" font-size="31.5" text-anchor="middle" textLength="20.0" lengthAdjust="spacingAndGlyphs">A</text>
<path d="M3524.0,494.5 L3524.0,572.4" stroke="#000" stroke-width="1.6" fill="none" stroke-linejoin="round" />
<path d="M3510.3,585.0 L3539.6,585.0 L3524.0,572.0 Z" fill="#000"/>
<path d="M3510.3,569.3 L3510.3,621.0" stroke="#000" stroke-width="1.6" fill="none" stroke-linejoin="round" />
<rect x="3601.9" y="532.3" width="146.9" height="45.2" stroke="#000" stroke-width="1.6" fill="none"/>
<path d="M3657.6,532.3 L3657.6,577.5" stroke="#000" stroke-width="1.6" fill="none" stroke-linejoin="round" />
<path d="M3622.6,544.5 L3647.6,544.5 L3636.9,565.3 L3611.9,565.3 Z" stroke="#000" stroke-width="2.6" fill="none" stroke-linejoin="round" />
<text x="3703.2" y="565.7" font-size="31.5" text-anchor="middle" textLength="78.4" lengthAdjust="spacingAndGlyphs">0,05cz</text>
<path d="M3601.9,554.9 L3580.5,554.9 L3541.5,585.0" stroke="#000" stroke-width="1.6" fill="none" stroke-linejoin="round" />
<path d="M3541.5,585.0 L3550.8,572.5 L3555.9,579.2 Z" fill="#000"/>
<text x="3122.7" y="590.0" font-size="31.5" text-anchor="start" textLength="25.0" lengthAdjust="spacingAndGlyphs">10</text>
<text x="3134.4" y="629.0" font-size="31.5" text-anchor="start" textLength="13.0" lengthAdjust="spacingAndGlyphs">0</text>
<path d="M3153.9,579.0 L3202.6,579.0 L3248.0,585.0" stroke="#000" stroke-width="1.6" fill="none" stroke-linejoin="round" />
<path d="M3153.9,617.2 L3248.0,617.2" stroke="#000" stroke-width="1.6" fill="none" stroke-linejoin="round" />
<circle cx="3168.7" cy="617.2" r="8.0" stroke="#000" stroke-width="1.6" fill="none"/>
<path d="M3168.7,617.0 L3168.7,579.0" stroke="#000" stroke-width="1.6" fill="none" stroke-linejoin="round" />
<path d="M3168.7,579.0 L3172.9,594.0 L3164.5,594.0 Z" fill="#000"/>
<path d="M3257.0,617.0 L3213.5,662.0" stroke="#000" stroke-width="1.6" fill="none" stroke-linejoin="round" />
<path d="M3305.8,617.0 L3347.9,662.0" stroke="#000" stroke-width="1.6" fill="none" stroke-linejoin="round" />
<path d="M3229,647 Q3281,683 3333,647" stroke="#000" stroke-width="1.6" fill="none" stroke-linejoin="round"/>
<path d="M3229.0,647.0 L3243.7,652.0 L3239.0,659.0 Z" fill="#000"/>
<path d="M3333.0,647.0 L3323.0,659.0 L3318.3,652.0 Z" fill="#000"/>
<text x="3260.0" y="652.3" font-size="31.5" text-anchor="start" textLength="42.0" lengthAdjust="spacingAndGlyphs">90°</text>
<path d="M3257.9,658.0 L3257.9,726.3" stroke="#000" stroke-width="1.6" fill="none" stroke-linejoin="round" />
<path d="M3304.6,658.0 L3304.6,726.3" stroke="#000" stroke-width="1.6" fill="none" stroke-linejoin="round" />
<text x="3355.3" y="689.3" font-size="31.5" text-anchor="start" textLength="123.0" lengthAdjust="spacingAndGlyphs">4x Ø14,5</text>
<path d="M3225.0,704.9 L3341.0,704.9" stroke="#000" stroke-width="1.6" fill="none" stroke-linejoin="round" />
<path d="M3257.9,704.9 L3242.9,709.1 L3242.9,700.7 Z" fill="#000"/>
<path d="M3304.6,704.9 L3319.6,700.7 L3319.6,709.1 Z" fill="#000"/>
<rect x="3341.0" y="704.1" width="184.2" height="45.6" stroke="#000" stroke-width="1.6" fill="none"/>
<path d="M3384.5,704.1 L3384.5,749.7" stroke="#000" stroke-width="1.6" fill="none" stroke-linejoin="round" />
<path d="M3451.9,704.1 L3451.9,749.7" stroke="#000" stroke-width="1.6" fill="none" stroke-linejoin="round" />
<path d="M3478.4,704.1 L3478.4,749.7" stroke="#000" stroke-width="1.6" fill="none" stroke-linejoin="round" />
<path d="M3503.3,704.1 L3503.3,749.7" stroke="#000" stroke-width="1.6" fill="none" stroke-linejoin="round" />
<circle cx="3362.8" cy="726.9" r="10.6" stroke="#000" stroke-width="2.4" fill="none"/>
<path d="M3348.0,726.9 L3377.5,726.9" stroke="#000" stroke-width="2.4" fill="none" stroke-linejoin="round" />
<path d="M3362.8,712.1 L3362.8,741.7" stroke="#000" stroke-width="2.4" fill="none" stroke-linejoin="round" />
<text x="3418.2" y="737.7" font-size="31.5" text-anchor="middle" textLength="58.0" lengthAdjust="spacingAndGlyphs">Ø0,1</text>
<text x="3465.2" y="737.7" font-size="31.5" text-anchor="middle" textLength="18.4" lengthAdjust="spacingAndGlyphs">A</text>
<text x="3490.9" y="737.7" font-size="31.5" text-anchor="middle" textLength="18.4" lengthAdjust="spacingAndGlyphs">B</text>
<text x="3514.2" y="737.7" font-size="31.5" text-anchor="middle" textLength="18.8" lengthAdjust="spacingAndGlyphs">C</text>
<circle cx="3116.0" cy="683.5" r="45.6" stroke="#000" stroke-width="1.6" fill="none"/>
<path d="M3070.4,683.5 L3161.6,683.5" stroke="#000" stroke-width="1.6" fill="none" stroke-linejoin="round" />
<text x="3116.0" y="716.5" font-size="31.5" text-anchor="middle" textLength="34.0" lengthAdjust="spacingAndGlyphs">A2</text>
<circle cx="3649.8" cy="692.4" r="45.6" stroke="#000" stroke-width="1.6" fill="none"/>
<path d="M3604.2,692.4 L3695.4,692.4" stroke="#000" stroke-width="1.6" fill="none" stroke-linejoin="round" />
<text x="3649.8" y="725.4" font-size="31.5" text-anchor="middle" textLength="34.0" lengthAdjust="spacingAndGlyphs">A4</text>
<path d="M3152.0,714.6 L3268.8,817.0" stroke="#000" stroke-width="1.6" fill="none" stroke-linejoin="round" />
<path d="M3268.8,817.0 L3254.8,810.3 L3260.3,804.0 Z" fill="#000"/>
<path d="M3617.5,726.3 L3533.7,816.0" stroke="#000" stroke-width="1.6" fill="none" stroke-linejoin="round" />
<path d="M3533.7,816.0 L3540.9,802.2 L3547.0,807.9 Z" fill="#000"/>
<path d="M3248.0,803.0 L3350.6,803.0" stroke="#000" stroke-width="3.2" fill="none" stroke-linejoin="round" />
<path d="M3389.6,803.0 L3542.7,803.0" stroke="#000" stroke-width="3.2" fill="none" stroke-linejoin="round" />
<path d="M3350.6,782.8 L3350.6,1279.0" stroke="#000" stroke-width="1.6" fill="none" stroke-linejoin="round" />
<path d="M3389.6,782.8 L3389.6,1279.0" stroke="#000" stroke-width="1.6" fill="none" stroke-linejoin="round" />
<path d="M3350.2,1023.0 L3340.0,1028.0 L3360.0,1037.0 L3350.2,1043.0" stroke="#000" stroke-width="1.6" fill="none" stroke-linejoin="round" />
<path d="M3389.0,1023.0 L3379.0,1028.0 L3399.0,1037.0 L3389.0,1043.0" stroke="#000" stroke-width="1.6" fill="none" stroke-linejoin="round" />
<path d="M3248.7,803.0 L3248.7,1258.0" stroke="#000" stroke-width="3.2" fill="none" stroke-linejoin="round" />
<path d="M3542.3,803.0 L3542.3,1258.0" stroke="#000" stroke-width="3.2" fill="none" stroke-linejoin="round" />
<path d="M3248.7,1257.9 L3350.2,1257.9" stroke="#000" stroke-width="3.2" fill="none" stroke-linejoin="round" />
<path d="M3389.0,1257.9 L3542.3,1257.9" stroke="#000" stroke-width="3.2" fill="none" stroke-linejoin="round" />
<clipPath id="c3248803"><rect x="3248.7" y="803" width="65.30000000000018" height="163.20000000000005"/></clipPath>
<path d="M3085.5,966.2 L3248.7,803.0 M3096.5,966.2 L3259.7,803.0 M3107.5,966.2 L3270.7,803.0 M3118.5,966.2 L3281.7,803.0 M3129.5,966.2 L3292.7,803.0 M3140.5,966.2 L3303.7,803.0 M3151.5,966.2 L3314.7,803.0 M3162.5,966.2 L3325.7,803.0 M3173.5,966.2 L3336.7,803.0 M3184.5,966.2 L3347.7,803.0 M3195.5,966.2 L3358.7,803.0 M3206.5,966.2 L3369.7,803.0 M3217.5,966.2 L3380.7,803.0 M3228.5,966.2 L3391.7,803.0 M3239.5,966.2 L3402.7,803.0 M3250.5,966.2 L3413.7,803.0 M3261.5,966.2 L3424.7,803.0 M3272.5,966.2 L3435.7,803.0 M3283.5,966.2 L3446.7,803.0 M3294.5,966.2 L3457.7,803.0 M3305.5,966.2 L3468.7,803.0" stroke="#000" stroke-width="1.1" clip-path="url(#c3248803)"/>
<clipPath id="c32481095"><rect x="3248.7" y="1095.8" width="65.30000000000018" height="162.10000000000014"/></clipPath>
<path d="M3086.6,1257.9 L3248.7,1095.8 M3097.6,1257.9 L3259.7,1095.8 M3108.6,1257.9 L3270.7,1095.8 M3119.6,1257.9 L3281.7,1095.8 M3130.6,1257.9 L3292.7,1095.8 M3141.6,1257.9 L3303.7,1095.8 M3152.6,1257.9 L3314.7,1095.8 M3163.6,1257.9 L3325.7,1095.8 M3174.6,1257.9 L3336.7,1095.8 M3185.6,1257.9 L3347.7,1095.8 M3196.6,1257.9 L3358.7,1095.8 M3207.6,1257.9 L3369.7,1095.8 M3218.6,1257.9 L3380.7,1095.8 M3229.6,1257.9 L3391.7,1095.8 M3240.6,1257.9 L3402.7,1095.8 M3251.6,1257.9 L3413.7,1095.8 M3262.6,1257.9 L3424.7,1095.8 M3273.6,1257.9 L3435.7,1095.8 M3284.6,1257.9 L3446.7,1095.8 M3295.6,1257.9 L3457.7,1095.8 M3306.6,1257.9 L3468.7,1095.8" stroke="#000" stroke-width="1.1" clip-path="url(#c32481095)"/>
<path d="M3248.7,966.2 L3314.0,966.2" stroke="#000" stroke-width="3.2" fill="none" stroke-linejoin="round" />
<path d="M3248.7,1095.8 L3314.0,1095.8" stroke="#000" stroke-width="3.2" fill="none" stroke-linejoin="round" />
<clipPath id="c3477803"><rect x="3477.3" y="803" width="65.0" height="163.20000000000005"/></clipPath>
<path d="M3314.1,966.2 L3477.3,803.0 M3325.1,966.2 L3488.3,803.0 M3336.1,966.2 L3499.3,803.0 M3347.1,966.2 L3510.3,803.0 M3358.1,966.2 L3521.3,803.0 M3369.1,966.2 L3532.3,803.0 M3380.1,966.2 L3543.3,803.0 M3391.1,966.2 L3554.3,803.0 M3402.1,966.2 L3565.3,803.0 M3413.1,966.2 L3576.3,803.0 M3424.1,966.2 L3587.3,803.0 M3435.1,966.2 L3598.3,803.0 M3446.1,966.2 L3609.3,803.0 M3457.1,966.2 L3620.3,803.0 M3468.1,966.2 L3631.3,803.0 M3479.1,966.2 L3642.3,803.0 M3490.1,966.2 L3653.3,803.0 M3501.1,966.2 L3664.3,803.0 M3512.1,966.2 L3675.3,803.0 M3523.1,966.2 L3686.3,803.0 M3534.1,966.2 L3697.3,803.0" stroke="#000" stroke-width="1.1" clip-path="url(#c3477803)"/>
<clipPath id="c34771095"><rect x="3477.3" y="1095.8" width="65.0" height="162.10000000000014"/></clipPath>
<path d="M3315.2,1257.9 L3477.3,1095.8 M3326.2,1257.9 L3488.3,1095.8 M3337.2,1257.9 L3499.3,1095.8 M3348.2,1257.9 L3510.3,1095.8 M3359.2,1257.9 L3521.3,1095.8 M3370.2,1257.9 L3532.3,1095.8 M3381.2,1257.9 L3543.3,1095.8 M3392.2,1257.9 L3554.3,1095.8 M3403.2,1257.9 L3565.3,1095.8 M3414.2,1257.9 L3576.3,1095.8 M3425.2,1257.9 L3587.3,1095.8 M3436.2,1257.9 L3598.3,1095.8 M3447.2,1257.9 L3609.3,1095.8 M3458.2,1257.9 L3620.3,1095.8 M3469.2,1257.9 L3631.3,1095.8 M3480.2,1257.9 L3642.3,1095.8 M3491.2,1257.9 L3653.3,1095.8 M3502.2,1257.9 L3664.3,1095.8 M3513.2,1257.9 L3675.3,1095.8 M3524.2,1257.9 L3686.3,1095.8 M3535.2,1257.9 L3697.3,1095.8" stroke="#000" stroke-width="1.1" clip-path="url(#c34771095)"/>
<path d="M3477.3,966.2 L3542.3,966.2" stroke="#000" stroke-width="3.2" fill="none" stroke-linejoin="round" />
<path d="M3477.3,1095.8 L3542.3,1095.8" stroke="#000" stroke-width="3.2" fill="none" stroke-linejoin="round" />
<path d="M3314.0,803.0 L3314.0,966.0" stroke="#000" stroke-width="1.6" fill="none" stroke-dasharray="14,4,3,4" stroke-linejoin="round" />
<path d="M3314.0,1095.8 L3314.0,1258.0" stroke="#000" stroke-width="1.6" fill="none" stroke-dasharray="14,4,3,4" stroke-linejoin="round" />
<path d="M3477.3,803.0 L3477.3,966.0" stroke="#000" stroke-width="1.6" fill="none" stroke-dasharray="14,4,3,4" stroke-linejoin="round" />
<path d="M3477.3,1095.8 L3477.3,1258.0" stroke="#000" stroke-width="1.6" fill="none" stroke-dasharray="14,4,3,4" stroke-linejoin="round" />
<path d="M3314.0,1028.4 L3314.0,1095.8" stroke="#000" stroke-width="1.6" fill="none" stroke-linejoin="round" />
<path d="M3281.6,940.0 L3281.6,1279.0 L3288.0,1301.0 L3288.0,1386.0" stroke="#000" stroke-width="1.6" fill="none" stroke-linejoin="round" />
<path d="M3510.2,940.0 L3510.2,1279.0 L3500.6,1301.0 L3500.6,1386.0" stroke="#000" stroke-width="1.6" fill="none" stroke-linejoin="round" />
<path d="M3281.6,820.0 L3281.6,940.0" stroke="#000" stroke-width="1.6" fill="none" stroke-linejoin="round" />
<path d="M3510.2,820.0 L3510.2,940.0" stroke="#000" stroke-width="1.6" fill="none" stroke-linejoin="round" />
<circle cx="3281.3" cy="868.5" r="11.0" stroke="#000" stroke-width="3.2" fill="none"/>
<circle cx="3281.3" cy="1192.9" r="11.0" stroke="#000" stroke-width="3.2" fill="none"/>
<circle cx="3509.6" cy="868.5" r="11.0" stroke="#000" stroke-width="3.2" fill="none"/>
<circle cx="3509.6" cy="1192.9" r="11.0" stroke="#000" stroke-width="3.2" fill="none"/>
<path d="M3241.5,868.5 L3628.0,868.5" stroke="#000" stroke-width="1.6" fill="none" stroke-linejoin="round" />
<path d="M3240.7,1192.9 L3627.8,1192.9" stroke="#000" stroke-width="1.6" fill="none" stroke-linejoin="round" />
<path d="M3542.7,803.0 L3623.3,803.0" stroke="#000" stroke-width="1.6" fill="none" stroke-linejoin="round" />
<text x="3629.0" y="814.0" font-size="31.5" text-anchor="start" textLength="42.0" lengthAdjust="spacingAndGlyphs">140</text>
<rect x="3628.0" y="853.7" width="51.8" height="30.3" stroke="#000" stroke-width="1.6" fill="none"/>
<text x="3631.0" y="880.0" font-size="31.5" text-anchor="start" textLength="45.0" lengthAdjust="spacingAndGlyphs">120</text>
<rect x="3627.8" y="1177.6" width="40.1" height="31.3" stroke="#000" stroke-width="1.6" fill="none"/>
<text x="3631.0" y="1205.0" font-size="31.5" text-anchor="start" textLength="33.0" lengthAdjust="spacingAndGlyphs">20</text>
<path d="M3607.7,803.0 L3607.7,1257.9" stroke="#000" stroke-width="1.6" fill="none" stroke-linejoin="round" />
<path d="M3607.7,803.0 L3611.9,818.0 L3603.5,818.0 Z" fill="#000"/>
<path d="M3607.7,868.5 L3611.9,883.5 L3603.5,883.5 Z" fill="#000"/>
<path d="M3607.7,1192.9 L3611.9,1207.9 L3603.5,1207.9 Z" fill="#000"/>
<circle cx="3607.7" cy="1257.9" r="8.0" stroke="#000" stroke-width="1.6" fill="none"/>
<text x="3629.8" y="1267.0" font-size="31.5" text-anchor="start" textLength="13.0" lengthAdjust="spacingAndGlyphs">0</text>
<path d="M3547.5,1257.9 L3623.7,1257.9" stroke="#000" stroke-width="1.6" fill="none" stroke-linejoin="round" />
<rect x="3121.5" y="963.4" width="38.9" height="45.0" stroke="#000" stroke-width="1.6" fill="none"/>
<text x="3140.9" y="998.0" font-size="31.5" text-anchor="middle" textLength="18.0" lengthAdjust="spacingAndGlyphs">C</text>
<path d="M3160.4,986.3 L3234.7,986.3" stroke="#000" stroke-width="1.6" fill="none" stroke-linejoin="round" />
<path d="M3234.7,986.3 L3248.7,971.5 L3248.7,1000.3 Z" fill="#000"/>
<rect x="3182.5" y="1008.4" width="40.1" height="31.2" stroke="#000" stroke-width="1.6" fill="none"/>
<text x="3202.5" y="1035.0" font-size="31.5" text-anchor="middle" textLength="33.0" lengthAdjust="spacingAndGlyphs">20</text>
<path d="M3176.5,1049.7 L3314.0,1049.7" stroke="#000" stroke-width="1.6" fill="none" stroke-linejoin="round" />
<path d="M3248.7,1049.7 L3263.7,1045.5 L3263.7,1053.9 Z" fill="#000"/>
<path d="M3314.0,1049.7 L3299.0,1053.9 L3299.0,1045.5 Z" fill="#000"/>
<path d="M3189.3,1095.8 L3248.7,1095.8" stroke="#000" stroke-width="1.6" fill="none" stroke-linejoin="round" />
<path d="M3189.3,1257.9 L3248.7,1257.9" stroke="#000" stroke-width="1.6" fill="none" stroke-linejoin="round" />
<path d="M3209.8,1095.8 L3209.8,1257.9" stroke="#000" stroke-width="1.6" fill="none" stroke-linejoin="round" />
<path d="M3209.8,1095.8 L3214.0,1110.8 L3205.6,1110.8 Z" fill="#000"/>
<path d="M3209.8,1257.9 L3205.6,1242.9 L3214.0,1242.9 Z" fill="#000"/>
<rect x="3168.5" y="1156.8" width="31.3" height="40.1" stroke="#000" stroke-width="1.6" fill="none"/>
<text x="3192.0" y="1176.8" font-size="31.5" text-anchor="middle" textLength="33.0" lengthAdjust="spacingAndGlyphs" transform="rotate(-90 3192.0 1176.8)">50</text>
<path d="M3425.2,1257.9 L3455.3,1257.9 L3440.4,1273.0 Z" fill="#000"/>
<path d="M3440.4,1273.0 L3440.4,1304.4" stroke="#000" stroke-width="1.6" fill="none" stroke-linejoin="round" />
<rect x="3420.4" y="1304.4" width="40.9" height="45.7" stroke="#000" stroke-width="1.6" fill="none"/>
<text x="3440.8" y="1339.0" font-size="31.5" text-anchor="middle" textLength="18.0" lengthAdjust="spacingAndGlyphs">B</text>
<circle cx="3161.7" cy="1357.3" r="45.3" stroke="#000" stroke-width="1.6" fill="none"/>
<path d="M3116.4,1357.3 L3207.0,1357.3" stroke="#000" stroke-width="1.6" fill="none" stroke-linejoin="round" />
<text x="3161.7" y="1390.3" font-size="31.5" text-anchor="middle" textLength="34.0" lengthAdjust="spacingAndGlyphs">A1</text>
<circle cx="3669.9" cy="1374.6" r="45.3" stroke="#000" stroke-width="1.6" fill="none"/>
<path d="M3624.6,1374.6 L3715.2,1374.6" stroke="#000" stroke-width="1.6" fill="none" stroke-linejoin="round" />
<text x="3669.9" y="1407.6" font-size="31.5" text-anchor="middle" textLength="34.0" lengthAdjust="spacingAndGlyphs">A3</text>
<path d="M3190.5,1320.4 L3268.0,1217.7" stroke="#000" stroke-width="1.6" fill="none" stroke-linejoin="round" />
<path d="M3268.0,1217.7 L3262.3,1232.2 L3255.6,1227.1 Z" fill="#000"/>
<path d="M3637.8,1340.5 L3530.3,1229.0" stroke="#000" stroke-width="1.6" fill="none" stroke-linejoin="round" />
<path d="M3530.3,1229.0 L3543.7,1236.9 L3537.7,1242.7 Z" fill="#000"/>
<path d="M3248.7,1257.9 L3248.7,1381.4" stroke="#000" stroke-width="1.6" fill="none" stroke-linejoin="round" />
<path d="M3542.3,1263.0 L3542.3,1381.4" stroke="#000" stroke-width="1.6" fill="none" stroke-linejoin="round" />
<circle cx="3248.7" cy="1366.2" r="8.0" stroke="#000" stroke-width="1.6" fill="none"/>
<path d="M3248.7,1366.2 L3542.3,1366.2" stroke="#000" stroke-width="1.6" fill="none" stroke-linejoin="round" />
<path d="M3288.0,1366.2 L3273.0,1370.4 L3273.0,1362.0 Z" fill="#000"/>
<path d="M3500.6,1366.2 L3485.6,1370.4 L3485.6,1362.0 Z" fill="#000"/>
<path d="M3542.3,1366.2 L3527.3,1370.4 L3527.3,1362.0 Z" fill="#000"/>
<text x="3259.0" y="1393.4" font-size="31.5" text-anchor="middle" textLength="13.0" lengthAdjust="spacingAndGlyphs" transform="rotate(-90 3259.0 1393.4)">0</text>
<rect x="3272.8" y="1386.2" width="30.0" height="36.1" stroke="#000" stroke-width="1.6" fill="none"/>
<text x="3298.0" y="1404.0" font-size="31.5" text-anchor="middle" textLength="30.0" lengthAdjust="spacingAndGlyphs" transform="rotate(-90 3298.0 1404.0)">10</text>
<rect x="3486.2" y="1386.2" width="30.4" height="58.6" stroke="#000" stroke-width="1.6" fill="none"/>
<text x="3512.0" y="1415.0" font-size="31.5" text-anchor="middle" textLength="48.0" lengthAdjust="spacingAndGlyphs" transform="rotate(-90 3512.0 1415.0)">420</text>
<text x="3556.0" y="1413.0" font-size="31.5" text-anchor="middle" textLength="48.0" lengthAdjust="spacingAndGlyphs" transform="rotate(-90 3556.0 1413.0)">430</text>
<text x="3802.3" y="914.0" font-size="31.5" text-anchor="start" textLength="32.0" lengthAdjust="spacingAndGlyphs">2x</text>
<rect x="3798.0" y="930.0" width="47.0" height="90.4" stroke="#000" stroke-width="1.6" fill="none"/>
<path d="M3798.0,976.3 L3845.0,976.3" stroke="#000" stroke-width="1.6" fill="none" stroke-linejoin="round" />
<circle cx="3822.0" cy="953.0" r="8.6" stroke="#000" stroke-width="2.4" fill="none"/>
<path d="M3810.0,953.0 L3834.0,953.0" stroke="#000" stroke-width="2.4" fill="none" stroke-linejoin="round" />
<path d="M3822.0,941.0 L3822.0,965.0" stroke="#000" stroke-width="2.4" fill="none" stroke-linejoin="round" />
<path d="M3822.0,985.0 L3822.0,1012.0" stroke="#000" stroke-width="2.4" fill="none" stroke-linejoin="round" />
<path d="M3805.0,1012.0 L3840.0,1012.0" stroke="#000" stroke-width="2.4" fill="none" stroke-linejoin="round" />
<path d="M3790.0,930.0 L3840.0,930.0" stroke="#000" stroke-width="1.6" fill="none" stroke-linejoin="round" />
<path d="M3840,566 Q3831,584 3840,602" stroke="#000" stroke-width="3.2" fill="none" stroke-linejoin="round"/>
<rect x="3484.0" y="1440.0" width="33.0" height="2.0" stroke="#000" stroke-width="1.6" fill="none"/>
<text x="3560.6" y="1530.0" font-size="31.5" text-anchor="start" textLength="74.0" lengthAdjust="spacingAndGlyphs">Pos 4</text>
<text x="3661.0" y="1578.9" font-size="31.5" text-anchor="start" textLength="58.0" lengthAdjust="spacingAndGlyphs">10h6</text>
<circle cx="3737.0" cy="1568.0" r="15.5" stroke="#000" stroke-width="2.2" fill="none"/>
<text x="3737.0" y="1579.0" font-size="26" text-anchor="middle" textLength="14.0" lengthAdjust="spacingAndGlyphs">E</text>
<path d="M3653.0,1594.0 L3840.0,1594.0" stroke="#000" stroke-width="1.6" fill="none" stroke-linejoin="round" />
<path d="M3812.8,1508.0 L3812.8,1603.0" stroke="#000" stroke-width="1.6" fill="none" stroke-linejoin="round" />
<path d="M3812.8,1568.0 L3808.6,1553.0 L3817.0,1553.0 Z" fill="#000"/>
<path d="M3812.8,1573.0 L3817.0,1588.0 L3808.6,1588.0 Z" fill="#000"/>
<path d="M3792.0,1568.0 L3840.0,1568.0" stroke="#000" stroke-width="1.6" fill="none" stroke-linejoin="round" />
<path d="M3792.0,1573.0 L3840.0,1573.0" stroke="#000" stroke-width="1.6" fill="none" stroke-linejoin="round" />
<path d="M3825.0,1519.0 L3840.0,1519.0" stroke="#000" stroke-width="1.6" fill="none" stroke-linejoin="round" />
<text x="3795.0" y="1520.0" font-size="28" text-anchor="middle" textLength="34.0" lengthAdjust="spacingAndGlyphs" transform="rotate(-90 3795.0 1520.0)">1,1</text>
<text x="3688.6" y="1641.5" font-size="31.5" text-anchor="start" textLength="70.0" lengthAdjust="spacingAndGlyphs">Ø12h6</text>
<circle cx="3773.0" cy="1631.0" r="15.5" stroke="#000" stroke-width="2.2" fill="none"/>
<text x="3773.0" y="1642.0" font-size="26" text-anchor="middle" textLength="14.0" lengthAdjust="spacingAndGlyphs">E</text>
<path d="M3682.0,1657.9 L3840.0,1657.9" stroke="#000" stroke-width="1.6" fill="none" stroke-linejoin="round" />
<path d="M3553.5,1794.0 L3705.0,1794.0 L3840.0,1685.0" stroke="#000" stroke-width="1.6" fill="none" stroke-linejoin="round" />
<path d="M3569.0,1762.4 L3607.0,1762.4 L3588.0,1794.0 L3569.0,1762.4" stroke="#000" stroke-width="1.6" fill="none" stroke-linejoin="round" />
<path d="M3588.0,1794.0 L3631.4,1719.0 L3706.0,1719.0" stroke="#000" stroke-width="1.6" fill="none" stroke-linejoin="round" />
<text x="3645.0" y="1751.5" font-size="31.5" text-anchor="start" textLength="60.0" lengthAdjust="spacingAndGlyphs">Rz16</text>
<text x="3686.0" y="1863.7" font-size="31.5" text-anchor="start" textLength="64.0" lengthAdjust="spacingAndGlyphs">Ø9,6</text>
<path d="M3679.0,1878.4 L3840.0,1878.4" stroke="#000" stroke-width="1.6" fill="none" stroke-linejoin="round" />
<path d="M3833.0,1696.0 L3840.0,1696.0" stroke="#000" stroke-width="1.6" fill="none" stroke-linejoin="round" />
<path d="M3833.0,1735.0 L3840.0,1735.0" stroke="#000" stroke-width="1.6" fill="none" stroke-linejoin="round" />
<path d="M3471.0,1908.4 L3840.0,1908.4" stroke="#000" stroke-width="3.2" fill="none" stroke-linejoin="round" />
<path d="M3471.0,1908.0 L3471.0,2200.0" stroke="#000" stroke-width="3.2" fill="none" stroke-linejoin="round" />
<path d="M3762.0,1908.4 L3762.0,2200.0" stroke="#000" stroke-width="3.2" fill="none" stroke-linejoin="round" />
<path d="M3471.0,1965.6 L3762.0,1965.6" stroke="#000" stroke-width="1.6" fill="none" stroke-linejoin="round" />
<rect x="3471.0" y="1971.0" width="293.0" height="227.0" fill="#000"/>
<text x="3479.0" y="1931.8" font-size="24" text-anchor="start" textLength="198.0" lengthAdjust="spacingAndGlyphs">Tolerierung ISO 8015</text>
<text x="3479.0" y="1960.0" font-size="24" text-anchor="start" textLength="268.0" lengthAdjust="spacingAndGlyphs">Oberfläche DIN EN ISO 1302</text>
<text x="3773.0" y="1931.8" font-size="24" text-anchor="start" textLength="88.0" lengthAdjust="spacingAndGlyphs">ISO 2768</text>
<text x="3773.0" y="1960.0" font-size="24" text-anchor="start" textLength="70.0" lengthAdjust="spacingAndGlyphs">Kanten</text>
<path d="M3762.0,1965.6 L3840.0,1965.6" stroke="#000" stroke-width="1.6" fill="none" stroke-linejoin="round" />
<text x="3768.0" y="1979.0" font-size="14" text-anchor="start" textLength="80.0" lengthAdjust="spacingAndGlyphs">Erstellt durch</text>
<rect x="3767.6" y="1993.0" width="72.4" height="29.8" fill="#000"/>
<path d="M3762.0,2025.5 L3840.0,2025.5" stroke="#000" stroke-width="1.6" fill="none" stroke-linejoin="round" />
<text x="3768.0" y="2039.0" font-size="14" text-anchor="start" textLength="28.0" lengthAdjust="spacingAndGlyphs">Titel</text>
<text x="3784.0" y="2082.7" font-size="46" text-anchor="start" textLength="132.0" lengthAdjust="spacingAndGlyphs">Führung</text>
<text x="2085.0" y="1525.3" font-size="31.5" text-anchor="start" textLength="76.0" lengthAdjust="spacingAndGlyphs">Pos 3</text>
<path d="M2280.9,2000 L2280.9,1647.6 A32.6,32.6 0 0 1 2346.1,1647.6 L2346.4,1994.9 L2336,2003.6 L2289,2003.6 Q2281,2003 2280.9,1996" stroke="#000" stroke-width="3.2" fill="none" stroke-linejoin="round"/>
<ellipse cx="2313.5" cy="1647.0" rx="20.4" ry="23.8" stroke="#000" stroke-width="3.2" fill="none" transform="rotate(0 2313.5 1647.0)"/>
<path d="M2313.5,1598.7 L2313.5,2062.2" stroke="#000" stroke-width="1.6" fill="none" stroke-linejoin="round" />
<path d="M2313.5,2062.2 L2321.0,2110.0 L2321.0,2145.3" stroke="#000" stroke-width="1.6" fill="none" stroke-linejoin="round" />
<path d="M2264.5,1644.9 L2361.0,1644.9" stroke="#000" stroke-width="1.6" fill="none" stroke-linejoin="round" />
<path d="M2264.5,1649.8 L2361.0,1649.8" stroke="#000" stroke-width="1.6" fill="none" stroke-linejoin="round" />
<path d="M2293.9,1504.9 L2293.9,1660.0" stroke="#000" stroke-width="1.6" fill="none" stroke-linejoin="round" />
<path d="M2333.0,1504.9 L2333.0,1660.0" stroke="#000" stroke-width="1.6" fill="none" stroke-linejoin="round" />
<path d="M2260.5,1526.0 L2365.1,1526.0" stroke="#000" stroke-width="1.6" fill="none" stroke-linejoin="round" />
<path d="M2293.9,1526.0 L2278.9,1530.2 L2278.9,1521.8 Z" fill="#000"/>
<path d="M2333.0,1526.0 L2348.0,1521.8 L2348.0,1530.2 Z" fill="#000"/>
<text x="2358.3" y="1509.5" font-size="31.5" text-anchor="start" textLength="57.0" lengthAdjust="spacingAndGlyphs">12H7</text>
<circle cx="2436.0" cy="1498.0" r="15.5" stroke="#000" stroke-width="2.2" fill="none"/>
<text x="2436.0" y="1509.0" font-size="26" text-anchor="middle" textLength="14.0" lengthAdjust="spacingAndGlyphs">E</text>
<rect x="2365.1" y="1526.0" width="185.6" height="45.5" stroke="#000" stroke-width="1.6" fill="none"/>
<path d="M2408.6,1526.0 L2408.6,1571.5" stroke="#000" stroke-width="1.6" fill="none" stroke-linejoin="round" />
<path d="M2476.6,1526.0 L2476.6,1571.5" stroke="#000" stroke-width="1.6" fill="none" stroke-linejoin="round" />
<path d="M2504.0,1526.0 L2504.0,1571.5" stroke="#000" stroke-width="1.6" fill="none" stroke-linejoin="round" />
<path d="M2529.0,1526.0 L2529.0,1571.5" stroke="#000" stroke-width="1.6" fill="none" stroke-linejoin="round" />
<circle cx="2386.8" cy="1548.8" r="10.6" stroke="#000" stroke-width="2.4" fill="none"/>
<path d="M2372.1,1548.8 L2401.6,1548.8" stroke="#000" stroke-width="2.4" fill="none" stroke-linejoin="round" />
<path d="M2386.8,1534.0 L2386.8,1563.5" stroke="#000" stroke-width="2.4" fill="none" stroke-linejoin="round" />
<text x="2442.6" y="1559.5" font-size="31.5" text-anchor="middle" textLength="58.5" lengthAdjust="spacingAndGlyphs">Ø0,1</text>
<text x="2490.3" y="1559.5" font-size="31.5" text-anchor="middle" textLength="18.4" lengthAdjust="spacingAndGlyphs">A</text>
<text x="2516.5" y="1559.5" font-size="31.5" text-anchor="middle" textLength="18.4" lengthAdjust="spacingAndGlyphs">B</text>
<text x="2539.8" y="1559.5" font-size="31.5" text-anchor="middle" textLength="18.7" lengthAdjust="spacingAndGlyphs">C</text>
<circle cx="2179.7" cy="1563.9" r="11.0" stroke="#000" stroke-width="1.6" fill="none"/>
<path d="M2179.7,1563.9 L2255.0,1563.9" stroke="#000" stroke-width="1.6" fill="none" stroke-linejoin="round" />
<path d="M2118.5,1607.4 L2154.4,1607.4 L2136.2,1638.0 L2118.5,1607.4" stroke="#000" stroke-width="1.6" fill="none" stroke-linejoin="round" />
<path d="M2136.2,1638.0 L2179.7,1563.9" stroke="#000" stroke-width="1.6" fill="none" stroke-linejoin="round" />
<path d="M2125.9,1638.6 L2146.3,1638.6" stroke="#000" stroke-width="1.6" fill="none" stroke-linejoin="round" />
<path d="M2146.3,1638.6 L2329.8,1661.2" stroke="#000" stroke-width="1.6" fill="none" stroke-linejoin="round" />
<path d="M2329.8,1661.2 L2314.4,1663.5 L2315.4,1655.2 Z" fill="#000"/>
<text x="2194.4" y="1596.0" font-size="31.5" text-anchor="start" textLength="59.0" lengthAdjust="spacingAndGlyphs">Rz16</text>
<path d="M2418.7,1591.9 L2418.7,1725.0" stroke="#000" stroke-width="1.6" fill="none" stroke-linejoin="round" />
<path d="M2418.7,1624.5 L2414.5,1609.5 L2422.9,1609.5 Z" fill="#000"/>
<path d="M2418.7,1669.9 L2422.9,1684.9 L2414.5,1684.9 Z" fill="#000"/>
<path d="M2317.6,1624.5 L2440.0,1624.5" stroke="#000" stroke-width="1.6" fill="none" stroke-linejoin="round" />
<path d="M2317.6,1669.9 L2440.0,1669.9" stroke="#000" stroke-width="1.6" fill="none" stroke-linejoin="round" />
<text x="2404.0" y="1704.7" font-size="31.5" text-anchor="middle" textLength="26.0" lengthAdjust="spacingAndGlyphs" transform="rotate(-90 2404.0 1704.7)">14</text>
<rect x="2098.7" y="1686.5" width="118.8" height="46.2" stroke="#000" stroke-width="1.6" fill="none"/>
<path d="M2154.4,1686.5 L2154.4,1732.7" stroke="#000" stroke-width="1.6" fill="none" stroke-linejoin="round" />
<path d="M2119.4,1699.0 L2144.4,1699.0 L2133.7,1720.2 L2108.7,1720.2 Z" stroke="#000" stroke-width="2.6" fill="none" stroke-linejoin="round" />
<text x="2185.9" y="1720.4" font-size="31.5" text-anchor="middle" textLength="53.7" lengthAdjust="spacingAndGlyphs">0,05</text>
<path d="M2217.5,1709.6 L2280.9,1709.6" stroke="#000" stroke-width="1.6" fill="none" stroke-linejoin="round" />
<path d="M2280.9,1709.6 L2265.9,1713.8 L2265.9,1705.4 Z" fill="#000"/>
<rect x="2155.2" y="1755.8" width="44.1" height="46.2" stroke="#000" stroke-width="1.6" fill="none"/>
<text x="2177.2" y="1790.0" font-size="31.5" text-anchor="middle" textLength="20.0" lengthAdjust="spacingAndGlyphs">A</text>
<path d="M2199.3,1778.7 L2265.9,1778.7" stroke="#000" stroke-width="1.6" fill="none" stroke-linejoin="round" />
<path d="M2265.9,1778.7 L2280.9,1764.5 L2280.9,1793.0 Z" fill="#000"/>
<rect x="2448.0" y="1717.0" width="42.2" height="46.2" stroke="#000" stroke-width="1.6" fill="none"/>
<text x="2469.0" y="1752.0" font-size="31.5" text-anchor="middle" textLength="18.0" lengthAdjust="spacingAndGlyphs">B</text>
<path d="M2490.2,1739.3 L2543.0,1739.3" stroke="#000" stroke-width="1.6" fill="none" stroke-linejoin="round" />
<text x="2076.4" y="1850.2" font-size="31.5" text-anchor="start" textLength="70.0" lengthAdjust="spacingAndGlyphs">Ø12H7</text>
<circle cx="2162.0" cy="1840.0" r="15.5" stroke="#000" stroke-width="2.2" fill="none"/>
<text x="2162.0" y="1851.0" font-size="26" text-anchor="middle" textLength="14.0" lengthAdjust="spacingAndGlyphs">E</text>
<path d="M2400.5,1832.0 L2435.8,1832.0 L2418.0,1864.0 L2400.5,1832.0" stroke="#000" stroke-width="1.6" fill="none" stroke-linejoin="round" />
<path d="M2418.0,1864.0 L2461.7,1789.0 L2536.0,1789.0" stroke="#000" stroke-width="1.6" fill="none" stroke-linejoin="round" />
<text x="2476.6" y="1820.2" font-size="31.5" text-anchor="start" textLength="59.0" lengthAdjust="spacingAndGlyphs">Rz16</text>
<path d="M2428.8,1864.0 L2408.3,1864.0 L2293.8,1940.9" stroke="#000" stroke-width="1.6" fill="none" stroke-linejoin="round" />
<path d="M2293.8,1940.9 L2303.9,1929.1 L2308.6,1936.0 Z" fill="#000"/>
<path d="M2293.8,1846.0 L2293.8,1940.9" stroke="#000" stroke-width="1.6" fill="none" stroke-linejoin="round" />
<path d="M2333.3,1846.0 L2333.3,1975.0" stroke="#000" stroke-width="1.6" fill="none" stroke-linejoin="round" />
<rect x="2053.9" y="1867.8" width="184.6" height="45.2" stroke="#000" stroke-width="1.6" fill="none"/>
<path d="M2097.5,1867.8 L2097.5,1913.0" stroke="#000" stroke-width="1.6" fill="none" stroke-linejoin="round" />
<path d="M2164.3,1867.8 L2164.3,1913.0" stroke="#000" stroke-width="1.6" fill="none" stroke-linejoin="round" />
<path d="M2192.1,1867.8 L2192.1,1913.0" stroke="#000" stroke-width="1.6" fill="none" stroke-linejoin="round" />
<path d="M2216.1,1867.8 L2216.1,1913.0" stroke="#000" stroke-width="1.6" fill="none" stroke-linejoin="round" />
<circle cx="2075.7" cy="1890.4" r="10.7" stroke="#000" stroke-width="2.4" fill="none"/>
<path d="M2060.9,1890.4 L2090.5,1890.4" stroke="#000" stroke-width="2.4" fill="none" stroke-linejoin="round" />
<path d="M2075.7,1875.6 L2075.7,1905.2" stroke="#000" stroke-width="2.4" fill="none" stroke-linejoin="round" />
<text x="2130.9" y="1901.2" font-size="31.5" text-anchor="middle" textLength="57.4" lengthAdjust="spacingAndGlyphs">Ø0,1</text>
<text x="2178.2" y="1901.2" font-size="31.5" text-anchor="middle" textLength="18.4" lengthAdjust="spacingAndGlyphs">A</text>
<text x="2204.1" y="1901.2" font-size="31.5" text-anchor="middle" textLength="18.4" lengthAdjust="spacingAndGlyphs">B</text>
<text x="2227.3" y="1901.2" font-size="31.5" text-anchor="middle" textLength="19.3" lengthAdjust="spacingAndGlyphs">C</text>
<path d="M2066.0,1867.3 L2366.0,1867.3" stroke="#000" stroke-width="1.6" fill="none" stroke-linejoin="round" />
<path d="M2281.5,1867.3 L2266.5,1871.5 L2266.5,1863.1 Z" fill="#000"/>
<path d="M2347.0,1867.3 L2362.0,1863.1 L2362.0,1871.5 Z" fill="#000"/>
<circle cx="2313.7" cy="1971.7" r="19.1" stroke="#000" stroke-width="3.2" fill="none"/>
<path d="M2277.5,1971.7 L2349.7,1971.7" stroke="#000" stroke-width="1.6" fill="none" stroke-linejoin="round" />
<path d="M2066.7,1983.1 L2103.0,1983.1 L2085.3,2014.5 L2066.7,1983.1" stroke="#000" stroke-width="1.6" fill="none" stroke-linejoin="round" />
<path d="M2085.3,2014.5 L2128.3,1940.3 L2203.3,1940.3" stroke="#000" stroke-width="1.6" fill="none" stroke-linejoin="round" />
<text x="2143.9" y="1972.8" font-size="31.5" text-anchor="start" textLength="59.0" lengthAdjust="spacingAndGlyphs">Rz16</text>
<path d="M2064.8,2014.5 L2153.4,2014.5" stroke="#000" stroke-width="1.6" fill="none" stroke-linejoin="round" />
<path d="M2153.4,2014.5 L2281.5,1927.2" stroke="#000" stroke-width="1.6" fill="none" stroke-linejoin="round" />
<path d="M2281.5,1927.2 L2271.5,1939.1 L2266.7,1932.2 Z" fill="#000"/>
<path d="M2221.6,2048.6 L2281.5,2003.0" stroke="#000" stroke-width="1.6" fill="none" stroke-linejoin="round" />
<path d="M2281.5,2003.0 L2272.1,2015.4 L2267.0,2008.7 Z" fill="#000"/>
<text x="2222.0" y="2030.0" font-size="31.5" text-anchor="middle" textLength="34.0" lengthAdjust="spacingAndGlyphs" transform="rotate(-36 2222.0 2030.0)">R2</text>
<text x="2407.0" y="1931.0" font-size="31.5" text-anchor="middle" textLength="78.0" lengthAdjust="spacingAndGlyphs" transform="rotate(-90 2407.0 1931.0)">3x45°</text>
<path d="M2427.4,1886.3 L2427.4,2036.3" stroke="#000" stroke-width="1.6" fill="none" stroke-linejoin="round" />
<path d="M2427.4,1994.0 L2423.2,1979.0 L2431.6,1979.0 Z" fill="#000"/>
<path d="M2427.4,2003.6 L2431.6,2018.6 L2423.2,2018.6 Z" fill="#000"/>
<path d="M2351.0,1994.0 L2449.2,1994.0" stroke="#000" stroke-width="1.6" fill="none" stroke-linejoin="round" />
<path d="M2351.0,2003.6 L2449.2,2003.6" stroke="#000" stroke-width="1.6" fill="none" stroke-linejoin="round" />
<path d="M2346.4,2003.0 L2346.4,2062.2 L2359.2,2110.0 L2359.2,2145.0" stroke="#000" stroke-width="1.6" fill="none" stroke-linejoin="round" />
<path d="M2281.0,2010.4 L2281.0,2140.0" stroke="#000" stroke-width="1.6" fill="none" stroke-linejoin="round" />
<circle cx="2281.0" cy="2124.9" r="8.0" stroke="#000" stroke-width="1.6" fill="none"/>
<path d="M2281.0,2124.9 L2359.2,2124.9" stroke="#000" stroke-width="1.6" fill="none" stroke-linejoin="round" />
<path d="M2321.0,2124.9 L2306.0,2129.1 L2306.0,2120.7 Z" fill="#000"/>
<path d="M2359.2,2124.9 L2344.2,2129.1 L2344.2,2120.7 Z" fill="#000"/>
<text x="2290.0" y="2153.5" font-size="31.5" text-anchor="middle" textLength="13.0" lengthAdjust="spacingAndGlyphs" transform="rotate(-90 2290.0 2153.5)">0</text>
<rect x="2303.9" y="2145.3" width="32.1" height="36.0" stroke="#000" stroke-width="1.6" fill="none"/>
<text x="2330.0" y="2163.3" font-size="31.5" text-anchor="middle" textLength="30.0" lengthAdjust="spacingAndGlyphs" transform="rotate(-90 2330.0 2163.3)">10</text>
<text x="2369.0" y="2160.0" font-size="31.5" text-anchor="middle" textLength="30.0" lengthAdjust="spacingAndGlyphs" transform="rotate(-90 2369.0 2160.0)">20</text>
<path d="M2557.5,1614.2 L2557.5,2004.1" stroke="#000" stroke-width="3.2" fill="none" stroke-linejoin="round" />
<path d="M2557.5,1614.2 L2622.0,1614.2 L2622.0,1679.4 L3141.7,1679.5" stroke="#000" stroke-width="3.2" fill="none" stroke-linejoin="round" />
<path d="M2626.8,1614.7 L3141.7,1614.8" stroke="#000" stroke-width="1.6" fill="none" stroke-linejoin="round" />
<path d="M3207.0,1614.8 L3265.1,1614.8" stroke="#000" stroke-width="1.6" fill="none" stroke-linejoin="round" />
<path d="M3141.7,1679.5 L3141.7,1614.8 L3207.0,1614.8 L3207.0,2003.5 L3141.2,2003.5 L3141.2,1939.5" stroke="#000" stroke-width="3.2" fill="none" stroke-linejoin="round" />
<path d="M2530.3,1646.8 L3265.1,1646.9 L3285.5,1640.6 L3305.9,1640.6" stroke="#000" stroke-width="1.6" fill="none" stroke-dasharray="30,10,6,10" stroke-linejoin="round" />
<path d="M3265.1,1614.8 L3285.5,1572.0 L3301.3,1572.0" stroke="#000" stroke-width="1.6" fill="none" stroke-linejoin="round" />
<text x="3308.7" y="1583.0" font-size="31.5" text-anchor="start" textLength="45.0" lengthAdjust="spacingAndGlyphs">120</text>
<rect x="3305.9" y="1624.6" width="47.6" height="31.8" stroke="#000" stroke-width="1.6" fill="none"/>
<text x="3310.0" y="1652.0" font-size="31.5" text-anchor="start" textLength="40.0" lengthAdjust="spacingAndGlyphs">110</text>
<path d="M3146.3,1680.0 L3301.3,1680.0" stroke="#000" stroke-width="1.6" fill="none" stroke-linejoin="round" />
<text x="3308.7" y="1690.4" font-size="31.5" text-anchor="start" textLength="45.0" lengthAdjust="spacingAndGlyphs">100</text>
<circle cx="2589.6" cy="1711.5" r="9.0" stroke="#000" stroke-width="3.2" fill="none"/>
<circle cx="2654.8" cy="1711.5" r="10.0" stroke="#000" stroke-width="1.6" fill="none"/>
<circle cx="3108.8" cy="1711.5" r="10.0" stroke="#000" stroke-width="1.6" fill="none"/>
<circle cx="3173.5" cy="1711.5" r="9.0" stroke="#000" stroke-width="3.2" fill="none"/>
<path d="M2564.8,1711.5 L3265.1,1711.5 L3285.5,1732.0 L3305.9,1732.0" stroke="#000" stroke-width="1.6" fill="none" stroke-linejoin="round" />
<rect x="3305.9" y="1716.2" width="40.3" height="31.3" stroke="#000" stroke-width="1.6" fill="none"/>
<text x="3326.0" y="1743.0" font-size="31.5" text-anchor="middle" textLength="32.0" lengthAdjust="spacingAndGlyphs">90</text>
<path d="M2589.6,1687.6 L2589.6,2044.5 L2596.7,2066.3 L2596.7,2122.2" stroke="#000" stroke-width="1.6" fill="none" stroke-linejoin="round" />
<path d="M2622.0,1684.9 L2622.0,1939.5" stroke="#000" stroke-width="1.6" fill="none" stroke-linejoin="round" />
<path d="M2622.0,2004.0 L2622.0,2044.5 L2635.4,2066.3 L2635.4,2118.0" stroke="#000" stroke-width="1.6" fill="none" stroke-linejoin="round" />
<path d="M2654.8,1685.7 L2654.8,2044.5 L2674.1,2066.3 L2674.1,2122.2" stroke="#000" stroke-width="1.6" fill="none" stroke-linejoin="round" />
<path d="M2645.0,1711.0 L2645.0,1798.5" stroke="#000" stroke-width="1.6" fill="none" stroke-linejoin="round" />
<path d="M2664.3,1711.0 L2664.3,1798.5" stroke="#000" stroke-width="1.6" fill="none" stroke-linejoin="round" />
<path d="M3108.8,1686.3 L3108.8,2122.0" stroke="#000" stroke-width="1.6" fill="none" stroke-linejoin="round" />
<path d="M3141.4,1684.0 L3141.4,1939.0" stroke="#000" stroke-width="1.6" fill="none" stroke-linejoin="round" />
<path d="M3141.2,2003.5 L3141.2,2047.1 L3147.5,2067.6 L3147.5,2118.0" stroke="#000" stroke-width="1.6" fill="none" stroke-linejoin="round" />
<path d="M3173.5,1686.0 L3173.5,2047.1 L3186.8,2067.6 L3186.8,2122.0" stroke="#000" stroke-width="1.6" fill="none" stroke-linejoin="round" />
<path d="M3206.7,2003.5 L3206.7,2047.1 L3225.7,2067.6 L3225.7,2118.0" stroke="#000" stroke-width="1.6" fill="none" stroke-linejoin="round" />
<path d="M3165.3,1711.0 L3165.3,1795.0" stroke="#000" stroke-width="1.6" fill="none" stroke-linejoin="round" />
<path d="M3181.6,1711.0 L3181.6,1795.0" stroke="#000" stroke-width="1.6" fill="none" stroke-linejoin="round" />
<path d="M3285.5,1572.0 L3285.5,2003.5" stroke="#000" stroke-width="1.6" fill="none" stroke-linejoin="round" />
<path d="M3285.5,1572.0 L3289.7,1587.0 L3281.3,1587.0 Z" fill="#000"/>
<path d="M3285.5,1640.6 L3289.7,1655.6 L3281.3,1655.6 Z" fill="#000"/>
<path d="M3285.5,1680.0 L3289.7,1695.0 L3281.3,1695.0 Z" fill="#000"/>
<path d="M3285.5,1732.0 L3289.7,1747.0 L3281.3,1747.0 Z" fill="#000"/>
<path d="M3285.5,1855.0 L3289.7,1870.0 L3281.3,1870.0 Z" fill="#000"/>
<path d="M3285.5,1893.7 L3289.7,1908.7 L3281.3,1908.7 Z" fill="#000"/>
<path d="M3285.5,1964.8 L3289.7,1979.8 L3281.3,1979.8 Z" fill="#000"/>
<text x="2696.2" y="1761.0" font-size="31.5" text-anchor="start" textLength="120.0" lengthAdjust="spacingAndGlyphs">4x Ø6H7</text>
<path d="M2611.9,1777.9 L2689.9,1777.9" stroke="#000" stroke-width="1.6" fill="none" stroke-linejoin="round" />
<path d="M2645.0,1777.9 L2630.0,1782.1 L2630.0,1773.7 Z" fill="#000"/>
<path d="M2664.3,1777.9 L2679.3,1773.7 L2679.3,1782.1 Z" fill="#000"/>
<rect x="2689.9" y="1777.9" width="185.1" height="45.1" stroke="#000" stroke-width="1.6" fill="none"/>
<path d="M2733.4,1777.9 L2733.4,1823.0" stroke="#000" stroke-width="1.6" fill="none" stroke-linejoin="round" />
<path d="M2800.8,1777.9 L2800.8,1823.0" stroke="#000" stroke-width="1.6" fill="none" stroke-linejoin="round" />
<path d="M2827.5,1777.9 L2827.5,1823.0" stroke="#000" stroke-width="1.6" fill="none" stroke-linejoin="round" />
<path d="M2852.5,1777.9 L2852.5,1823.0" stroke="#000" stroke-width="1.6" fill="none" stroke-linejoin="round" />
<circle cx="2711.7" cy="1800.5" r="10.6" stroke="#000" stroke-width="2.4" fill="none"/>
<path d="M2696.9,1800.5 L2726.4,1800.5" stroke="#000" stroke-width="2.4" fill="none" stroke-linejoin="round" />
<path d="M2711.7,1785.7 L2711.7,1815.2" stroke="#000" stroke-width="2.4" fill="none" stroke-linejoin="round" />
<text x="2767.1" y="1811.2" font-size="31.5" text-anchor="middle" textLength="58.0" lengthAdjust="spacingAndGlyphs">Ø0,1</text>
<text x="2814.2" y="1811.2" font-size="31.5" text-anchor="middle" textLength="18.4" lengthAdjust="spacingAndGlyphs">A</text>
<text x="2840.0" y="1811.2" font-size="31.5" text-anchor="middle" textLength="18.4" lengthAdjust="spacingAndGlyphs">B</text>
<text x="2863.8" y="1811.2" font-size="31.5" text-anchor="middle" textLength="19.4" lengthAdjust="spacingAndGlyphs">C</text>
<text x="2921.8" y="1761.0" font-size="31.5" text-anchor="start" textLength="92.0" lengthAdjust="spacingAndGlyphs">4x M6</text>
<rect x="2914.5" y="1774.6" width="184.7" height="45.0" stroke="#000" stroke-width="1.6" fill="none"/>
<path d="M2958.0,1774.6 L2958.0,1819.6" stroke="#000" stroke-width="1.6" fill="none" stroke-linejoin="round" />
<path d="M3025.8,1774.6 L3025.8,1819.6" stroke="#000" stroke-width="1.6" fill="none" stroke-linejoin="round" />
<path d="M3052.5,1774.6 L3052.5,1819.6" stroke="#000" stroke-width="1.6" fill="none" stroke-linejoin="round" />
<path d="M3076.9,1774.6 L3076.9,1819.6" stroke="#000" stroke-width="1.6" fill="none" stroke-linejoin="round" />
<circle cx="2936.2" cy="1797.1" r="10.6" stroke="#000" stroke-width="2.4" fill="none"/>
<path d="M2921.5,1797.1 L2951.0,1797.1" stroke="#000" stroke-width="2.4" fill="none" stroke-linejoin="round" />
<path d="M2936.2,1782.3 L2936.2,1811.9" stroke="#000" stroke-width="2.4" fill="none" stroke-linejoin="round" />
<text x="2991.9" y="1807.9" font-size="31.5" text-anchor="middle" textLength="58.3" lengthAdjust="spacingAndGlyphs">Ø0,1</text>
<text x="3039.2" y="1807.9" font-size="31.5" text-anchor="middle" textLength="18.4" lengthAdjust="spacingAndGlyphs">A</text>
<text x="3064.7" y="1807.9" font-size="31.5" text-anchor="middle" textLength="18.4" lengthAdjust="spacingAndGlyphs">B</text>
<text x="3088.1" y="1807.9" font-size="31.5" text-anchor="middle" textLength="19.2" lengthAdjust="spacingAndGlyphs">C</text>
<path d="M3099.2,1774.1 L3214.3,1774.1" stroke="#000" stroke-width="1.6" fill="none" stroke-linejoin="round" />
<path d="M3165.3,1774.1 L3150.3,1778.3 L3150.3,1769.9 Z" fill="#000"/>
<path d="M3181.6,1774.1 L3196.6,1769.9 L3196.6,1778.3 Z" fill="#000"/>
<rect x="3306.7" y="1839.4" width="39.8" height="31.1" stroke="#000" stroke-width="1.6" fill="none"/>
<text x="3326.6" y="1866.0" font-size="31.5" text-anchor="middle" textLength="32.0" lengthAdjust="spacingAndGlyphs">30</text>
<path d="M2589.0,1906.8 L3265.3,1906.8 L3285.7,1855.0 L3306.7,1855.0" stroke="#000" stroke-width="1.6" fill="none" stroke-linejoin="round" />
<text x="3308.7" y="1904.0" font-size="31.5" text-anchor="start" textLength="32.0" lengthAdjust="spacingAndGlyphs">20</text>
<path d="M3146.7,1939.5 L3265.3,1939.5 L3285.7,1893.7 L3302.0,1893.7" stroke="#000" stroke-width="1.6" fill="none" stroke-linejoin="round" />
<rect x="3306.7" y="1949.6" width="35.7" height="30.8" stroke="#000" stroke-width="1.6" fill="none"/>
<text x="3324.5" y="1976.0" font-size="31.5" text-anchor="middle" textLength="30.0" lengthAdjust="spacingAndGlyphs">10</text>
<path d="M2540.5,1971.7 L3265.3,1971.6 L3285.7,1964.8 L3306.7,1964.8" stroke="#000" stroke-width="1.6" fill="none" stroke-dasharray="30,10,6,10" stroke-linejoin="round" />
<circle cx="3285.7" cy="2003.5" r="8.0" stroke="#000" stroke-width="1.6" fill="none"/>
<text x="3308.7" y="2013.0" font-size="31.5" text-anchor="start" textLength="13.0" lengthAdjust="spacingAndGlyphs">0</text>
<path d="M2627.2,2003.6 L3300.7,2003.5" stroke="#000" stroke-width="1.6" fill="none" stroke-linejoin="round" />
<circle cx="2589.9" cy="1906.2" r="9.0" stroke="#000" stroke-width="3.2" fill="none"/>
<circle cx="2654.8" cy="1906.2" r="10.0" stroke="#000" stroke-width="1.6" fill="none"/>
<circle cx="3108.5" cy="1906.8" r="10.0" stroke="#000" stroke-width="1.6" fill="none"/>
<circle cx="3174.0" cy="1906.8" r="9.0" stroke="#000" stroke-width="3.2" fill="none"/>
<path d="M2621.8,1939.5 L3141.2,1939.5" stroke="#000" stroke-width="3.2" fill="none" stroke-linejoin="round" />
<path d="M2621.8,1939.5 L2621.8,2004.1" stroke="#000" stroke-width="3.2" fill="none" stroke-linejoin="round" />
<path d="M2557.2,1951.8 L2621.8,1951.8" stroke="#000" stroke-width="3.2" fill="none" stroke-linejoin="round" />
<path d="M2557.2,1990.5 L2621.8,1990.5" stroke="#000" stroke-width="3.2" fill="none" stroke-linejoin="round" />
<path d="M2557.2,2004.1 L2621.8,2004.1" stroke="#000" stroke-width="3.2" fill="none" stroke-linejoin="round" />
<clipPath id="qc"><path d="M2557,1876 Q2650,1860 2694,1939.5 L2557,1939.5 Z"/></clipPath>
<path d="M2477,1951.8 L2557,1871.8 M2499,1951.8 L2579,1871.8 M2521,1951.8 L2601,1871.8 M2543,1951.8 L2623,1871.8 M2565,1951.8 L2645,1871.8 M2587,1951.8 L2667,1871.8 M2609,1951.8 L2689,1871.8 M2631,1951.8 L2711,1871.8 M2653,1951.8 L2733,1871.8 M2675,1951.8 L2755,1871.8 M2697,1951.8 L2777,1871.8" stroke="#000" stroke-width="1.1" clip-path="url(#qc)"/>
<path d="M2557,1876 Q2650,1860 2694,1939.5" stroke="#000" stroke-width="3.2" fill="none" stroke-linejoin="round"/>
<clipPath id="qc2"><rect x="2557" y="1939.5" width="65" height="12"/><rect x="2557" y="1990.5" width="65" height="14"/></clipPath>
<path d="M2517,2004 L2547,1974 M2545,2004 L2575,1974 M2573,2004 L2603,1974 M2601,2004 L2631,1974 M2629,2004 L2659,1974" stroke="#000" stroke-width="1.1" clip-path="url(#qc2)"/>
<path d="M2543.0,1739.3 L2557.5,1724.5 L2557.5,1754.0 Z" fill="#000"/>
<path d="M2557.2,2004.0 L2557.2,2118.0" stroke="#000" stroke-width="1.6" fill="none" stroke-linejoin="round" />
<circle cx="2557.2" cy="2102.3" r="8.0" stroke="#000" stroke-width="1.6" fill="none"/>
<path d="M2557.2,2102.2 L3225.7,2102.2" stroke="#000" stroke-width="1.6" fill="none" stroke-linejoin="round" />
<path d="M2596.7,2102.2 L2581.7,2106.4 L2581.7,2098.0 Z" fill="#000"/>
<path d="M2635.4,2102.2 L2620.4,2106.4 L2620.4,2098.0 Z" fill="#000"/>
<path d="M2674.1,2102.2 L2659.1,2106.4 L2659.1,2098.0 Z" fill="#000"/>
<path d="M3108.5,2102.2 L3093.5,2106.4 L3093.5,2098.0 Z" fill="#000"/>
<path d="M3147.5,2102.2 L3132.5,2106.4 L3132.5,2098.0 Z" fill="#000"/>
<path d="M3186.8,2102.2 L3171.8,2106.4 L3171.8,2098.0 Z" fill="#000"/>
<path d="M3225.7,2102.2 L3210.7,2106.4 L3210.7,2098.0 Z" fill="#000"/>
<text x="2566.0" y="2140.0" font-size="31.5" text-anchor="middle" textLength="13.0" lengthAdjust="spacingAndGlyphs" transform="rotate(-90 2566.0 2140.0)">0</text>
<rect x="2580.3" y="2122.7" width="31.9" height="36.3" stroke="#000" stroke-width="1.6" fill="none"/>
<text x="2606.0" y="2141.0" font-size="31.5" text-anchor="middle" textLength="30.0" lengthAdjust="spacingAndGlyphs" transform="rotate(-90 2606.0 2141.0)">10</text>
<text x="2645.0" y="2140.0" font-size="31.5" text-anchor="middle" textLength="30.0" lengthAdjust="spacingAndGlyphs" transform="rotate(-90 2645.0 2140.0)">20</text>
<rect x="2658.6" y="2122.7" width="31.3" height="41.2" stroke="#000" stroke-width="1.6" fill="none"/>
<text x="2684.0" y="2143.0" font-size="31.5" text-anchor="middle" textLength="30.0" lengthAdjust="spacingAndGlyphs" transform="rotate(-90 2684.0 2143.0)">30</text>
<rect x="3093.0" y="2122.6" width="31.3" height="52.1" stroke="#000" stroke-width="1.6" fill="none"/>
<text x="3118.0" y="2148.6" font-size="31.5" text-anchor="middle" textLength="46.0" lengthAdjust="spacingAndGlyphs" transform="rotate(-90 3118.0 2148.6)">170</text>
<text x="3157.0" y="2148.0" font-size="31.5" text-anchor="middle" textLength="46.0" lengthAdjust="spacingAndGlyphs" transform="rotate(-90 3157.0 2148.0)">180</text>
<rect x="3170.4" y="2122.6" width="31.6" height="52.1" stroke="#000" stroke-width="1.6" fill="none"/>
<text x="3196.0" y="2148.6" font-size="31.5" text-anchor="middle" textLength="46.0" lengthAdjust="spacingAndGlyphs" transform="rotate(-90 3196.0 2148.6)">190</text>
<text x="3235.0" y="2148.0" font-size="31.5" text-anchor="middle" textLength="46.0" lengthAdjust="spacingAndGlyphs" transform="rotate(-90 3235.0 2148.0)">200</text>
<path d="M2076.1,890.6 L2289.3,1012.5 L2947.9,636.0" stroke="#000" stroke-width="3.0" fill="none" stroke-linejoin="round" />
<path d="M2076.1,910.2 L2289.3,1033.8 L2947.9,654.6" stroke="#000" stroke-width="3.0" fill="none" stroke-linejoin="round" />
<path d="M2076.1,890.6 L2076.1,910.2" stroke="#000" stroke-width="3.0" fill="none" stroke-linejoin="round" />
<path d="M2289.3,1012.5 L2289.3,1033.8" stroke="#000" stroke-width="3.0" fill="none" stroke-linejoin="round" />
<path d="M2947.9,636.0 L2947.9,654.6" stroke="#000" stroke-width="3.0" fill="none" stroke-linejoin="round" />
<path d="M2076.1,890.6 L2082.4,886.8" stroke="#000" stroke-width="3.0" fill="none" stroke-linejoin="round" />
<path d="M2941.6,632.3 L2947.9,636.0" stroke="#000" stroke-width="3.0" fill="none" stroke-linejoin="round" />
<path d="M2083.3,888.0 L2145.7,921.5 L2151.8,919.8 L2228.9,963.2 L2234.3,971.2 L2298.7,1008.0" stroke="#000" stroke-width="3.0" fill="none" stroke-linejoin="round" />
<path d="M 2082.9,886.9 L 2082.9,862.5 L 2099.2,800.6 Q 2101.3,796.5 2110.8,792.4 L 2118.9,788.4 Q 2129.8,786.3 2138.0,795.8 Q 2142.1,801.3 2144.1,810.8 L 2152.9,848.9 L 2155.0,863.8 Q 2159.7,886.9 2176.1,900.5 L 2236.6,933.2 Q 2239.3,935.2 2240.0,933.2 L 2251.5,889.6 Q 2259.5,877.5 2273.0,875.8 Q 2288.9,878.7 2295.0,895.8 L 2304.8,944.8 L 2312.1,979.1 L 2313.4,1001.1" stroke="#000" stroke-width="3.0" fill="none" stroke-linejoin="round"/>
<path d="M 2106.7,797.9 Q 2114.9,795.8 2123.0,802.6 Q 2127.1,808.1 2129.1,818.9 L 2138.7,873.3 Q 2143.4,892.4 2162.5,907.3 L 2218.2,939.3 Q 2226.4,944.0 2233.2,943.4 Q 2238.6,941.6 2240.0,933.2" stroke="#000" stroke-width="3.0" fill="none" stroke-linejoin="round"/>
<path d="M2127.1,809.4 L2142.7,802.0" stroke="#000" stroke-width="3.0" fill="none" stroke-linejoin="round" />
<path d="M2130.5,820.3 L2144.8,812.1" stroke="#000" stroke-width="3.0" fill="none" stroke-linejoin="round" />
<path d="M2140.7,873.3 L2153.6,865.9" stroke="#000" stroke-width="3.0" fill="none" stroke-linejoin="round" />
<path d="M2165.2,908.0 L2177.4,901.2" stroke="#000" stroke-width="3.0" fill="none" stroke-linejoin="round" />
<path d="M2218.2,939.3 L2232.5,932.5" stroke="#000" stroke-width="3.0" fill="none" stroke-linejoin="round" />
<path d="M2280.3,906.9 L2291.3,900.7" stroke="#000" stroke-width="3.0" fill="none" stroke-linejoin="round" />
<path d="M2273.0,875.8 L2281.5,881.2 L2288.9,878.7" stroke="#000" stroke-width="3.0" fill="none" stroke-linejoin="round" />
<path d="M2281.5,908.1 L2298.7,985.2 L2298.7,1008.9" stroke="#000" stroke-width="3.0" fill="none" stroke-linejoin="round" />
<path d="M2298.7,985.2 L2312.1,979.1" stroke="#000" stroke-width="3.0" fill="none" stroke-linejoin="round" />
<ellipse cx="2111.5" cy="818.7" rx="10.2" ry="14.5" stroke="#000" stroke-width="5" fill="none" transform="rotate(-22 2111.5 818.7)"/>
<ellipse cx="2110.5" cy="820.2" rx="5.2" ry="7.2" stroke="#000" stroke-width="1.0" fill="#fff" transform="rotate(-22 2110.5 820.2)"/>
<ellipse cx="2265.6" cy="905.6" rx="10.2" ry="14.5" stroke="#000" stroke-width="5" fill="none" transform="rotate(-22 2265.6 905.6)"/>
<ellipse cx="2264.6" cy="907.1" rx="5.2" ry="7.2" stroke="#000" stroke-width="1.0" fill="#fff" transform="rotate(-22 2264.6 907.1)"/>
<path d="M2135.5,795.1 L2387.4,649.3" stroke="#000" stroke-width="3.0" fill="none" stroke-linejoin="round" />
<path d="M2148.7,819.0 L2394.3,669.4" stroke="#000" stroke-width="3.0" fill="none" stroke-linejoin="round" />
<path d="M2140.8,807.3 L2391.1,659.9" stroke="#000" stroke-width="1.6" fill="none" stroke-dasharray="24,9,6,9" stroke-linejoin="round" />
<path d="M 2382.0,649.1 Q 2394.7,648.0 2394.7,665.3 Q 2393.5,673.4 2385.4,678.0" stroke="#000" stroke-width="3.0" fill="none" stroke-linejoin="round"/>
<path d="M2154.2,846.9 L2410.1,700.0" stroke="#000" stroke-width="3.0" fill="none" stroke-linejoin="round" />
<path d="M2360.0,727.7 L2414.3,695.3" stroke="#000" stroke-width="3.0" fill="none" stroke-linejoin="round" />
<path d="M2281.3,880.0 L2538.5,734.1" stroke="#000" stroke-width="3.0" fill="none" stroke-linejoin="round" />
<path d="M2293.5,902.8 L2543.8,763.3" stroke="#000" stroke-width="3.0" fill="none" stroke-linejoin="round" />
<path d="M2286.6,890.6 L2541.2,747.4" stroke="#000" stroke-width="1.6" fill="none" stroke-dasharray="24,9,6,9" stroke-linejoin="round" />
<path d="M 2531.0,738.1 Q 2544.9,733.5 2550.6,747.3 Q 2551.8,762.4 2542.6,765.8 Q 2537.9,768.1 2535.6,761.2" stroke="#000" stroke-width="3.0" fill="none" stroke-linejoin="round"/>
<path d="M2370.4,651.4 L2370.4,636.4 L2402.7,616.8 L2431.6,633.6" stroke="#000" stroke-width="3.0" fill="none" stroke-linejoin="round" />
<path d="M2370.4,636.4 L2542.6,735.3" stroke="#000" stroke-width="3.0" fill="none" stroke-linejoin="round" />
<path d="M2385.4,678.0 L2510.2,749.2" stroke="#000" stroke-width="3.0" fill="none" stroke-linejoin="round" />
<path d="M2418.9,624.9 L2652.2,490.8" stroke="#000" stroke-width="3.0" fill="none" stroke-linejoin="round" />
<path d="M2431.6,633.6 L2665.7,500.0" stroke="#000" stroke-width="3.0" fill="none" stroke-linejoin="round" />
<path d="M 2652.2,490.8 Q 2663.2,487.1 2667.1,497.5" stroke="#000" stroke-width="3.0" fill="none" stroke-linejoin="round"/>
<path d="M2554.1,703.4 L2572.6,696.5" stroke="#000" stroke-width="3.0" fill="none" stroke-linejoin="round" />
<path d="M2554.1,703.4 L2569.1,713.1" stroke="#000" stroke-width="3.0" fill="none" stroke-linejoin="round" />
<path d="M2572.6,696.5 L2797.5,563.6" stroke="#000" stroke-width="3.0" fill="none" stroke-linejoin="round" />
<path d="M 2542.6,727.7 L 2563.4,715.0 Q 2581.8,720.8 2584.1,738.1 L 2584.1,745.0 L 2554.1,762.4" stroke="#000" stroke-width="3.0" fill="none" stroke-linejoin="round"/>
<path d="M2542.6,727.7 L2546.0,735.8" stroke="#000" stroke-width="3.0" fill="none" stroke-linejoin="round" />
<path d="M2572.6,713.1 L2808.1,578.3" stroke="#000" stroke-width="3.0" fill="none" stroke-linejoin="round" />
<path d="M2584.6,738.6 L2819.5,606.0" stroke="#000" stroke-width="3.0" fill="none" stroke-linejoin="round" />
<path d="M2558.7,738.1 L2817.9,589.7" stroke="#000" stroke-width="1.6" fill="none" stroke-dasharray="24,9,6,9" stroke-linejoin="round" />
<path d="M2644.9,493.8 L2644.9,476.1 L2677.9,458.3 L2780.0,514.6" stroke="#000" stroke-width="3.0" fill="none" stroke-linejoin="round" />
<path d="M2646.1,477.3 L2675.5,492.6" stroke="#000" stroke-width="3.0" fill="none" stroke-linejoin="round" />
<path d="M2720.0,483.6 L2844.0,555.4" stroke="#000" stroke-width="3.0" fill="none" stroke-linejoin="round" />
<path d="M2797.5,563.6 L2816.3,572.6" stroke="#000" stroke-width="3.0" fill="none" stroke-linejoin="round" />
<path d="M2797.5,563.6 L2797.5,581.5" stroke="#000" stroke-width="3.0" fill="none" stroke-linejoin="round" />
<path d="M 2804.8,577.4 Q 2819.5,571.7 2825.2,584.8 Q 2830.9,601.1 2819.5,609.3 Q 2813.0,610.1 2810.6,604.4" stroke="#000" stroke-width="3.0" fill="none" stroke-linejoin="round"/>
<path d="M 2816.3,571.7 L 2844.0,555.4 Q 2858.7,560.3 2858.7,576.6 L 2857.9,588.9 L 2828.5,603.6" stroke="#000" stroke-width="3.0" fill="none" stroke-linejoin="round"/>
<path d="M2822.8,579.1 L2826.1,602.7" stroke="#000" stroke-width="3.0" fill="none" stroke-linejoin="round" />
<path d="M2693.8,465.7 L2735.4,443.6" stroke="#000" stroke-width="3.0" fill="none" stroke-linejoin="round" />
<path d="M2720.8,481.6 L2747.7,465.7" stroke="#000" stroke-width="3.0" fill="none" stroke-linejoin="round" />
<path d="M 2733.0,444.3 Q 2745.2,441.2 2750.1,453.4 Q 2751.4,464.5 2747.7,466.9" stroke="#000" stroke-width="3.0" fill="none" stroke-linejoin="round"/>
<path d="M2717.1,468.1 L2755.0,446.7" stroke="#000" stroke-width="1.6" fill="none" stroke-dasharray="24,9,6,9" stroke-linejoin="round" />
<path d="M 2723.8,449.8 Q 2726.9,436.3 2737.9,431.4 L 2748.9,425.5 Q 2763.6,425.3 2769.7,442.4 L 2780.0,502.4" stroke="#000" stroke-width="3.0" fill="none" stroke-linejoin="round"/>
<path d="M 2733.6,435.7 Q 2746.5,433.9 2751.4,448.5 L 2766.0,507.9" stroke="#000" stroke-width="3.0" fill="none" stroke-linejoin="round"/>
<path d="M2756.3,457.1 L2770.0,450.4" stroke="#000" stroke-width="3.0" fill="none" stroke-linejoin="round" />
<path d="M2768.9,510.6 L2782.0,504.0" stroke="#000" stroke-width="3.0" fill="none" stroke-linejoin="round" />
<path d="M2782.0,504.0 L2789.3,522.8" stroke="#000" stroke-width="3.0" fill="none" stroke-linejoin="round" />
<path d="M 2770.6,447.7 L 2785.3,511.4 L 2789.3,522.8" stroke="#000" stroke-width="3.0" fill="none" stroke-linejoin="round"/>
<path d="M2848.9,555.4 L2889.7,532.6" stroke="#000" stroke-width="3.0" fill="none" stroke-linejoin="round" />
<path d="M2858.7,572.6 L2899.5,551.3" stroke="#000" stroke-width="3.0" fill="none" stroke-linejoin="round" />
<path d="M 2889.7,532.6 Q 2902.7,529.3 2901.9,548.9 Q 2901.1,553.0 2898.7,555.4" stroke="#000" stroke-width="3.0" fill="none" stroke-linejoin="round"/>
<path d="M2858.7,563.6 L2909.3,535.0" stroke="#000" stroke-width="1.6" fill="none" stroke-dasharray="24,9,6,9" stroke-linejoin="round" />
<path d="M 2877.4,534.2 Q 2881.5,516.3 2902.7,514.6 Q 2917.4,515.4 2923.1,534.2 L 2939.4,617.4 L 2939.4,637.0" stroke="#000" stroke-width="3.0" fill="none" stroke-linejoin="round"/>
<path d="M 2886.4,526.1 Q 2898.7,524.4 2903.6,537.5 L 2923.9,622.3 L 2923.9,646.8" stroke="#000" stroke-width="3.0" fill="none" stroke-linejoin="round"/>
<path d="M2910.1,541.6 L2922.3,535.0" stroke="#000" stroke-width="3.0" fill="none" stroke-linejoin="round" />
<path d="M2924.8,625.6 L2938.6,617.4" stroke="#000" stroke-width="3.0" fill="none" stroke-linejoin="round" />
<path d="M2847.3,597.0 L2855.4,602.7 L2863.6,614.2 L2922.3,646.8" stroke="#000" stroke-width="3.0" fill="none" stroke-linejoin="round" />
<path d="M2923.9,646.8 L2947.6,634.6" stroke="#000" stroke-width="3.0" fill="none" stroke-linejoin="round" />
<ellipse cx="2461.7" cy="633.6" rx="6.5" ry="4.2" stroke="#000" stroke-width="2.2" fill="none" transform="rotate(-28 2461.7 633.6)"/>
<path d="M2439.7,646.1 L2483.7,621.1" stroke="#000" stroke-width="1.2" fill="none" stroke-linejoin="round" />
<path d="M2441.7,622.1 L2481.7,645.1" stroke="#000" stroke-width="1.2" fill="none" stroke-linejoin="round" />
<ellipse cx="2430.5" cy="650.7" rx="6.5" ry="4.2" stroke="#000" stroke-width="2.2" fill="none" transform="rotate(-28 2430.5 650.7)"/>
<path d="M2408.5,663.2 L2452.5,638.2" stroke="#000" stroke-width="1.2" fill="none" stroke-linejoin="round" />
<path d="M2410.5,639.2 L2450.5,662.2" stroke="#000" stroke-width="1.2" fill="none" stroke-linejoin="round" />
<ellipse cx="2522.9" cy="704.1" rx="6.5" ry="4.2" stroke="#000" stroke-width="2.2" fill="none" transform="rotate(-28 2522.9 704.1)"/>
<path d="M2500.9,716.6 L2544.9,691.6" stroke="#000" stroke-width="1.2" fill="none" stroke-linejoin="round" />
<path d="M2502.9,692.6 L2542.9,715.6" stroke="#000" stroke-width="1.2" fill="none" stroke-linejoin="round" />
<ellipse cx="2553.6" cy="686.8" rx="6.5" ry="4.2" stroke="#000" stroke-width="2.2" fill="none" transform="rotate(-28 2553.6 686.8)"/>
<path d="M2531.6,699.3 L2575.6,674.3" stroke="#000" stroke-width="1.2" fill="none" stroke-linejoin="round" />
<path d="M2533.6,675.3 L2573.6,698.3" stroke="#000" stroke-width="1.2" fill="none" stroke-linejoin="round" />
<ellipse cx="2706.7" cy="492.0" rx="6.5" ry="4.2" stroke="#000" stroke-width="2.2" fill="none" transform="rotate(-28 2706.7 492.0)"/>
<path d="M2684.7,504.5 L2728.7,479.5" stroke="#000" stroke-width="1.2" fill="none" stroke-linejoin="round" />
<path d="M2686.7,480.5 L2726.7,503.5" stroke="#000" stroke-width="1.2" fill="none" stroke-linejoin="round" />
<ellipse cx="2676.1" cy="510.0" rx="6.5" ry="4.2" stroke="#000" stroke-width="2.2" fill="none" transform="rotate(-28 2676.1 510.0)"/>
<path d="M2654.1,522.5 L2698.1,497.5" stroke="#000" stroke-width="1.2" fill="none" stroke-linejoin="round" />
<path d="M2656.1,498.5 L2696.1,521.5" stroke="#000" stroke-width="1.2" fill="none" stroke-linejoin="round" />
<ellipse cx="2798.3" cy="545.6" rx="6.5" ry="4.2" stroke="#000" stroke-width="2.2" fill="none" transform="rotate(-28 2798.3 545.6)"/>
<path d="M2776.3,558.1 L2820.3,533.1" stroke="#000" stroke-width="1.2" fill="none" stroke-linejoin="round" />
<path d="M2778.3,534.1 L2818.3,557.1" stroke="#000" stroke-width="1.2" fill="none" stroke-linejoin="round" />
<ellipse cx="2767.3" cy="563.6" rx="6.5" ry="4.2" stroke="#000" stroke-width="2.2" fill="none" transform="rotate(-28 2767.3 563.6)"/>
<path d="M2745.3,576.1 L2789.3,551.1" stroke="#000" stroke-width="1.2" fill="none" stroke-linejoin="round" />
<path d="M2747.3,552.1 L2787.3,575.1" stroke="#000" stroke-width="1.2" fill="none" stroke-linejoin="round" />
<path d="M2412.0,661.8 L2481.3,622.6" stroke="#000" stroke-width="1.2" fill="none" stroke-linejoin="round" />
<path d="M2504.4,715.0 L2572.6,675.7" stroke="#000" stroke-width="1.2" fill="none" stroke-linejoin="round" />
<path d="M2658.3,520.8 L2724.4,482.8" stroke="#000" stroke-width="1.2" fill="none" stroke-linejoin="round" />
<path d="M2747.7,575.0 L2817.9,534.2" stroke="#000" stroke-width="1.2" fill="none" stroke-linejoin="round" />
<circle cx="2441.5" cy="1081.5" r="33.4" stroke="#000" stroke-width="1.6" fill="none"/>
<text x="2441.5" y="1092.5" font-size="32" text-anchor="middle" textLength="15.0" lengthAdjust="spacingAndGlyphs">5</text>
<circle cx="2533.2" cy="1081.5" r="33.4" stroke="#000" stroke-width="1.6" fill="none"/>
<text x="2533.2" y="1092.5" font-size="32" text-anchor="middle" textLength="15.0" lengthAdjust="spacingAndGlyphs">4</text>
<circle cx="2631.3" cy="1081.5" r="33.4" stroke="#000" stroke-width="1.6" fill="none"/>
<text x="2631.3" y="1092.5" font-size="32" text-anchor="middle" textLength="15.0" lengthAdjust="spacingAndGlyphs">3</text>
<circle cx="2745.3" cy="1081.5" r="33.4" stroke="#000" stroke-width="1.6" fill="none"/>
<text x="2745.3" y="1092.5" font-size="32" text-anchor="middle" textLength="15.0" lengthAdjust="spacingAndGlyphs">2</text>
<circle cx="2872.6" cy="1081.5" r="33.4" stroke="#000" stroke-width="1.6" fill="none"/>
<text x="2872.6" y="1092.5" font-size="32" text-anchor="middle" textLength="15.0" lengthAdjust="spacingAndGlyphs">1</text>
<path d="M2419.2,1051.3 L2265.4,917.1" stroke="#000" stroke-width="1.6" fill="none" stroke-linejoin="round" />
<path d="M2265.4,917.1 L2279.5,923.8 L2273.9,930.1 Z" fill="#000"/>
<path d="M2517.3,1051.3 L2408.6,840.2" stroke="#000" stroke-width="1.6" fill="none" stroke-linejoin="round" />
<path d="M2408.6,840.2 L2419.2,851.6 L2411.7,855.4 Z" fill="#000"/>
<path d="M2626.0,1048.1 L2565.0,756.4" stroke="#000" stroke-width="1.6" fill="none" stroke-linejoin="round" />
<path d="M2565.0,756.4 L2572.2,770.2 L2564.0,771.9 Z" fill="#000"/>
<path d="M2756.0,1048.1 L2875.3,622.7" stroke="#000" stroke-width="1.6" fill="none" stroke-linejoin="round" />
<path d="M2875.3,622.7 L2875.3,638.3 L2867.2,636.0 Z" fill="#000"/>
<path d="M2872.6,1048.1 L2892.2,689.0" stroke="#000" stroke-width="1.6" fill="none" stroke-linejoin="round" />
<path d="M2892.2,689.0 L2895.6,704.2 L2887.2,703.8 Z" fill="#000"/></g></svg>
</div></body></html>
